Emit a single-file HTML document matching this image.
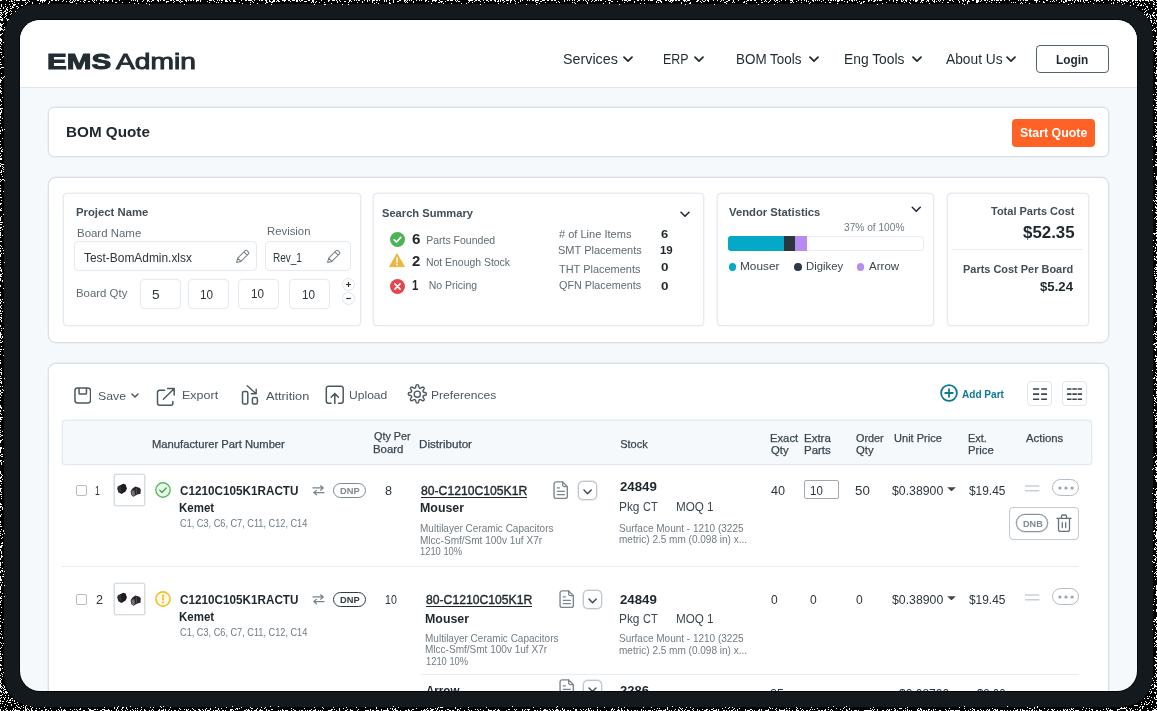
<!DOCTYPE html>
<html><head><meta charset="utf-8"><title>EMS Admin - BOM Quote</title>
<style>
html,body{margin:0;padding:0;background:#000;}
body{width:1157px;height:711px;overflow:hidden;position:relative;font-family:"Liberation Sans",sans-serif;}
.frame{position:absolute;left:4px;top:4px;width:1149px;height:703px;border-radius:32px;background:#14191d;}
.noise{position:absolute;left:0;top:0;}
.win{position:absolute;left:20px;top:20px;width:1117px;height:671px;border-radius:20px;overflow:hidden;background:#f6f9fc;box-shadow:0 0 0 1px #05080a;}
.pg{position:absolute;left:-20px;top:-20px;width:1157px;height:711px;will-change:transform;}
.pg div,.pg svg,.pg span{position:absolute;box-sizing:border-box;}
.t{line-height:1;white-space:pre;}
</style></head><body>
<div class="frame"></div>
<svg class="noise" width="1157" height="711" viewBox="0 0 1157 711" shape-rendering="crispEdges"><path d="M0 0.5h2M6 0.5h1M11 0.5h1M14 0.5h1M16 0.5h4M22 0.5h4M28 0.5h1M37 0.5h2M40 0.5h6M51 0.5h2M55 0.5h2M58 0.5h1M63 0.5h1M70 0.5h1M73 0.5h1M75 0.5h1M77 0.5h2M84 0.5h2M92 0.5h1M94 0.5h1M96 0.5h1M100 0.5h2M103 0.5h1M105 0.5h4M112 0.5h1M119 0.5h1M131 0.5h1M133 0.5h1M135 0.5h1M137 0.5h1M143 0.5h1M147 0.5h2M152 0.5h2M157 0.5h2M160 0.5h1M163 0.5h2M170 0.5h2M173 0.5h1M176 0.5h3M180 0.5h1M185 0.5h2M188 0.5h1M190 0.5h2M193 0.5h1M196 0.5h3M200 0.5h1M209 0.5h3M213 0.5h1M217 0.5h1M219 0.5h1M221 0.5h2M225 0.5h2M229 0.5h1M233 0.5h2M241 0.5h1M245 0.5h2M248 0.5h4M254 0.5h1M259 0.5h1M261 0.5h2M265 0.5h2M269 0.5h1M273 0.5h2M277 0.5h2M282 0.5h4M288 0.5h2M292 0.5h3M296 0.5h2M299 0.5h1M301 0.5h2M308 0.5h2M312 0.5h2M321 0.5h1M328 0.5h2M332 0.5h3M336 0.5h1M339 0.5h1M349 0.5h2M354 0.5h1M356 0.5h1M358 0.5h2M364 0.5h1M367 0.5h1M369 0.5h1M372 0.5h3M376 0.5h2M379 0.5h1M384 0.5h1M386 0.5h1M389 0.5h1M393 0.5h1M399 0.5h2M404 0.5h2M407 0.5h1M409 0.5h1M411 0.5h1M416 0.5h1M419 0.5h1M421 0.5h1M425 0.5h2M432 0.5h5M439 0.5h1M447 0.5h2M450 0.5h3M455 0.5h1M457 0.5h1M468 0.5h5M475 0.5h2M478 0.5h2M483 0.5h1M486 0.5h2M490 0.5h2M494 0.5h2M498 0.5h1M500 0.5h1M502 0.5h2M506 0.5h3M510 0.5h2M514 0.5h1M520 0.5h1M522 0.5h1M527 0.5h1M529 0.5h1M532 0.5h2M535 0.5h4M542 0.5h3M547 0.5h2M551 0.5h2M554 0.5h2M564 0.5h1M567 0.5h1M569 0.5h1M572 0.5h1M574 0.5h1M578 0.5h2M583 0.5h1M585 0.5h1M588 0.5h1M592 0.5h1M595 0.5h2M598 0.5h1M600 0.5h2M608 0.5h3M622 0.5h1M624 0.5h3M628 0.5h3M637 0.5h2M641 0.5h1M644 0.5h1M648 0.5h1M650 0.5h3M657 0.5h4M665 0.5h2M668 0.5h1M670 0.5h4M675 0.5h2M678 0.5h2M683 0.5h3M687 0.5h3M697 0.5h2M702 0.5h1M705 0.5h1M707 0.5h2M713 0.5h1M717 0.5h1M721 0.5h1M723 0.5h1M728 0.5h2M733 0.5h1M738 0.5h1M747 0.5h2M750 0.5h2M754 0.5h2M761 0.5h1M765 0.5h1M770 0.5h1M774 0.5h1M776 0.5h2M781 0.5h1M785 0.5h1M790 0.5h3M798 0.5h1M801 0.5h1M804 0.5h1M806 0.5h1M812 0.5h2M815 0.5h1M817 0.5h1M819 0.5h1M823 0.5h1M828 0.5h1M830 0.5h2M833 0.5h1M835 0.5h1M837 0.5h3M841 0.5h2M849 0.5h1M851 0.5h2M854 0.5h1M856 0.5h1M868 0.5h2M871 0.5h1M874 0.5h2M877 0.5h1M879 0.5h3M889 0.5h1M893 0.5h1M896 0.5h2M901 0.5h1M903 0.5h1M905 0.5h2M910 0.5h1M913 0.5h1M915 0.5h3M921 0.5h3M927 0.5h2M932 0.5h1M934 0.5h1M938 0.5h1M940 0.5h1M943 0.5h1M949 0.5h2M952 0.5h1M958 0.5h1M962 0.5h2M965 0.5h1M968 0.5h1M972 0.5h2M976 0.5h3M981 0.5h1M984 0.5h2M987 0.5h1M991 0.5h2M994 0.5h1M996 0.5h3M1000 0.5h2M1004 0.5h1M1009 0.5h1M1018 0.5h1M1020 0.5h1M1023 0.5h1M1025 0.5h3M1034 0.5h4M1046 0.5h2M1053 0.5h1M1056 0.5h1M1061 0.5h1M1065 0.5h2M1068 0.5h3M1072 0.5h1M1075 0.5h1M1077 0.5h2M1080 0.5h1M1083 0.5h1M1085 0.5h3M1094 0.5h1M1096 0.5h3M1101 0.5h2M1108 0.5h1M1111 0.5h1M1114 0.5h1M1117 0.5h3M1121 0.5h6M1128 0.5h1M1132 0.5h2M1135 0.5h3M1139 0.5h2M1142 0.5h2M1145 0.5h4M1150 0.5h3M1156 0.5h1M9 1.5h1M11 1.5h2M29 1.5h1M40 1.5h1M42 1.5h1M44 1.5h1M49 1.5h1M62 1.5h1M66 1.5h1M69 1.5h1M72 1.5h1M74 1.5h1M80 1.5h1M83 1.5h1M88 1.5h2M93 1.5h1M107 1.5h1M112 1.5h1M137 1.5h1M142 1.5h1M147 1.5h1M149 1.5h1M151 1.5h1M158 1.5h1M166 1.5h3M174 1.5h1M179 1.5h1M181 1.5h2M186 1.5h1M196 1.5h1M200 1.5h1M207 1.5h1M214 1.5h1M225 1.5h3M230 1.5h1M233 1.5h3M252 1.5h1M266 1.5h1M269 1.5h2M272 1.5h3M276 1.5h1M278 1.5h2M284 1.5h1M290 1.5h1M296 1.5h2M300 1.5h1M304 1.5h3M312 1.5h2M316 1.5h1M328 1.5h1M337 1.5h1M340 1.5h1M344 1.5h2M349 1.5h1M351 1.5h1M362 1.5h1M367 1.5h1M372 1.5h1M384 1.5h1M386 1.5h1M393 1.5h1M397 1.5h2M404 1.5h1M406 1.5h1M413 1.5h1M425 1.5h1M428 1.5h1M432 1.5h1M435 1.5h1M440 1.5h3M445 1.5h1M456 1.5h1M458 1.5h2M469 1.5h1M474 1.5h1M480 1.5h1M488 1.5h1M495 1.5h1M497 1.5h2M500 1.5h1M504 1.5h1M510 1.5h1M515 1.5h1M520 1.5h1M535 1.5h1M540 1.5h2M558 1.5h1M564 1.5h1M577 1.5h1M586 1.5h1M591 1.5h1M594 1.5h1M605 1.5h1M611 1.5h2M617 1.5h1M627 1.5h1M634 1.5h1M656 1.5h1M660 1.5h2M669 1.5h2M672 1.5h1M684 1.5h1M686 1.5h1M696 1.5h2M700 1.5h1M703 1.5h2M708 1.5h1M720 1.5h1M726 1.5h2M733 1.5h1M744 1.5h1M746 1.5h1M764 1.5h1M766 1.5h1M769 1.5h1M775 1.5h1M779 1.5h1M792 1.5h1M796 1.5h1M806 1.5h1M808 1.5h1M813 1.5h1M821 1.5h1M837 1.5h2M844 1.5h1M847 1.5h1M852 1.5h1M859 1.5h1M863 1.5h2M868 1.5h1M873 1.5h2M893 1.5h1M901 1.5h2M906 1.5h1M915 1.5h2M921 1.5h1M926 1.5h1M928 1.5h1M933 1.5h2M936 1.5h1M939 1.5h1M953 1.5h1M959 1.5h1M963 1.5h1M967 1.5h3M976 1.5h3M980 1.5h1M989 1.5h1M1036 1.5h1M1039 1.5h1M1043 1.5h1M1050 1.5h1M1052 1.5h1M1054 1.5h1M1061 1.5h1M1063 1.5h1M1065 1.5h2M1074 1.5h1M1078 1.5h1M1080 1.5h1M1083 1.5h1M1090 1.5h1M1096 1.5h1M1099 1.5h1M1119 1.5h1M1123 1.5h1M1126 1.5h2M1132 1.5h1M1140 1.5h1M1148 1.5h1M1153 1.5h1M14 2.5h1M25 2.5h1M27 2.5h1M32 2.5h1M42 2.5h1M49 2.5h1M70 2.5h3M84 2.5h1M94 2.5h1M103 2.5h1M115 2.5h2M122 2.5h1M129 2.5h1M166 2.5h1M173 2.5h1M180 2.5h1M209 2.5h1M216 2.5h1M218 2.5h1M221 2.5h1M239 2.5h1M250 2.5h1M253 2.5h1M266 2.5h2M271 2.5h2M311 2.5h1M313 2.5h1M315 2.5h1M319 2.5h1M324 2.5h1M337 2.5h1M348 2.5h1M357 2.5h1M362 2.5h1M372 2.5h1M376 2.5h1M389 2.5h1M393 2.5h1M405 2.5h1M407 2.5h1M413 2.5h1M438 2.5h2M441 2.5h1M468 2.5h1M472 2.5h1M484 2.5h1M503 2.5h1M510 2.5h1M518 2.5h1M536 2.5h2M545 2.5h1M556 2.5h1M559 2.5h1M572 2.5h1M574 2.5h1M587 2.5h1M609 2.5h1M624 2.5h1M634 2.5h1M656 2.5h1M658 2.5h1M661 2.5h1M671 2.5h1M681 2.5h1M690 2.5h1M701 2.5h1M724 2.5h2M732 2.5h1M734 2.5h1M743 2.5h2M756 2.5h1M761 2.5h2M768 2.5h1M777 2.5h1M790 2.5h2M793 2.5h1M801 2.5h1M810 2.5h1M825 2.5h1M829 2.5h2M847 2.5h1M857 2.5h1M861 2.5h1M863 2.5h1M886 2.5h1M896 2.5h1M904 2.5h1M909 2.5h1M920 2.5h1M922 2.5h1M934 2.5h1M942 2.5h1M947 2.5h2M959 2.5h1M967 2.5h1M976 2.5h2M986 2.5h1M991 2.5h1M996 2.5h1M999 2.5h1M1011 2.5h1M1013 2.5h1M1015 2.5h1M1021 2.5h1M1025 2.5h1M1036 2.5h1M1043 2.5h2M1059 2.5h1M1063 2.5h2M1074 2.5h1M1084 2.5h1M1088 2.5h1M1103 2.5h1M1113 2.5h1M1117 2.5h1M1121 2.5h1M1130 2.5h1M1135 2.5h1M1137 2.5h1M1154 2.5h1M1156 2.5h1M12 3.5h1M18 3.5h1M26 3.5h1M32 3.5h1M39 3.5h1M48 3.5h1M76 3.5h1M99 3.5h1M134 3.5h1M138 3.5h1M146 3.5h1M242 3.5h1M257 3.5h1M265 3.5h1M331 3.5h1M374 3.5h1M378 3.5h1M389 3.5h2M431 3.5h1M443 3.5h1M451 3.5h1M461 3.5h1M466 3.5h1M498 3.5h1M507 3.5h1M515 3.5h1M539 3.5h1M575 3.5h1M587 3.5h1M603 3.5h1M609 3.5h1M640 3.5h1M644 3.5h1M681 3.5h1M689 3.5h2M726 3.5h1M746 3.5h1M809 3.5h1M837 3.5h1M860 3.5h2M882 3.5h1M910 3.5h1M929 3.5h1M962 3.5h1M967 3.5h1M1020 3.5h1M1022 3.5h1M1029 3.5h1M1071 3.5h1M1093 3.5h1M1111 3.5h1M1113 3.5h1M1124 3.5h1M1133 3.5h1M1139 3.5h1M1144 3.5h1M1149 3.5h1M1153 3.5h1M1 4.5h1M5 4.5h1M9 4.5h1M13 4.5h3M25 4.5h1M149 4.5h1M184 4.5h1M250 4.5h1M271 4.5h1M314 4.5h1M324 4.5h2M342 4.5h1M348 4.5h1M480 4.5h1M526 4.5h1M536 4.5h1M619 4.5h1M685 4.5h1M714 4.5h1M758 4.5h1M774 4.5h1M877 4.5h1M964 4.5h1M1068 4.5h1M1122 4.5h1M1133 4.5h1M1138 4.5h1M1141 4.5h1M1145 4.5h1M1153 4.5h2M1 5.5h1M13 5.5h2M21 5.5h2M1130 5.5h1M1137 5.5h2M1140 5.5h2M1143 5.5h1M1156 5.5h1M1 6.5h1M5 6.5h1M10 6.5h1M12 6.5h1M16 6.5h2M1146 6.5h2M1153 6.5h1M3 7.5h1M7 7.5h1M12 7.5h2M18 7.5h1M1136 7.5h1M1147 7.5h1M0 8.5h1M3 8.5h1M6 8.5h1M10 8.5h2M17 8.5h1M1145 8.5h1M1151 8.5h1M1155 8.5h2M6 9.5h2M1142 9.5h1M1144 9.5h1M1148 9.5h1M1155 9.5h1M0 10.5h2M5 10.5h1M7 10.5h1M10 10.5h1M1146 10.5h1M4 11.5h2M9 11.5h1M11 11.5h1M15 11.5h1M1145 11.5h1M0 12.5h2M3 12.5h1M6 12.5h2M1144 12.5h1M1153 12.5h2M1 13.5h1M5 13.5h2M11 13.5h1M1147 13.5h1M1153 13.5h1M0 14.5h1M2 14.5h1M5 14.5h1M10 14.5h1M1144 14.5h1M1146 14.5h2M1149 14.5h1M1152 14.5h1M1156 14.5h1M1 15.5h1M6 15.5h1M1146 15.5h1M1150 15.5h1M1152 15.5h3M1156 15.5h1M0 16.5h1M5 16.5h1M1148 16.5h1M1150 16.5h1M1153 16.5h1M0 17.5h2M4 17.5h1M1147 17.5h1M1150 17.5h1M1154 17.5h1M2 18.5h1M6 18.5h1M1150 18.5h2M1155 18.5h1M0 19.5h3M7 19.5h2M1 20.5h2M7 20.5h1M1150 20.5h2M1154 20.5h1M1156 20.5h1M1151 21.5h1M1156 21.5h1M1151 22.5h1M1154 22.5h1M0 23.5h1M3 23.5h1M1153 23.5h1M1155 23.5h1M0 24.5h3M0 25.5h2M1152 25.5h1M1 26.5h1M0 27.5h1M4 27.5h1M1156 27.5h1M0 28.5h2M1154 28.5h1M0 29.5h3M4 29.5h1M1153 29.5h1M0 30.5h1M3 30.5h1M1152 30.5h1M1154 30.5h2M1155 31.5h1M2 33.5h1M0 34.5h2M0 35.5h1M1153 36.5h1M1156 36.5h1M1156 37.5h1M0 38.5h1M0 39.5h2M1156 39.5h1M0 40.5h2M1 41.5h1M1154 41.5h2M0 42.5h1M3 42.5h1M1154 42.5h1M1156 42.5h1M0 43.5h1M1156 43.5h1M1 44.5h1M1154 44.5h3M0 46.5h1M1156 47.5h1M0 48.5h1M1 49.5h1M1154 49.5h1M1156 49.5h1M1153 50.5h1M1154 51.5h1M0 52.5h2M1156 52.5h1M1156 53.5h1M1 54.5h1M1155 54.5h2M3 56.5h1M2 57.5h1M1156 57.5h1M1155 58.5h1M0 59.5h1M1155 60.5h1M0 62.5h1M1156 63.5h1M0 64.5h2M1154 66.5h1M1 67.5h3M1156 67.5h1M0 68.5h1M1156 68.5h1M1156 70.5h1M1156 71.5h1M1154 72.5h1M1156 72.5h1M1 73.5h1M1155 73.5h2M1155 75.5h1M4 76.5h1M1 77.5h1M3 77.5h1M1156 77.5h1M2 78.5h1M1156 78.5h1M0 79.5h1M0 80.5h2M0 81.5h1M0 82.5h1M1155 82.5h2M1155 83.5h2M1156 84.5h1M0 85.5h1M0 87.5h1M1155 87.5h1M1 88.5h1M1156 89.5h1M0 90.5h1M0 91.5h2M0 92.5h1M1156 92.5h1M1 93.5h1M1153 94.5h1M1155 94.5h1M1156 96.5h1M2 97.5h1M1156 98.5h1M0 99.5h1M1154 99.5h1M0 100.5h1M1155 100.5h2M1 101.5h1M1156 102.5h1M1156 103.5h1M1 104.5h1M0 105.5h1M1153 105.5h1M1156 105.5h1M1155 107.5h2M0 108.5h3M0 109.5h1M1154 109.5h3M1 110.5h1M1156 110.5h1M1 111.5h1M0 112.5h2M1155 112.5h1M0 113.5h1M0 114.5h1M1156 115.5h1M0 116.5h1M0 117.5h1M1155 117.5h1M2 118.5h1M1155 118.5h1M0 120.5h1M1154 122.5h3M0 123.5h1M1155 125.5h1M1156 126.5h1M1 127.5h1M1156 127.5h1M2 129.5h1M4 129.5h1M1155 129.5h1M0 130.5h1M2 130.5h1M1156 130.5h1M0 131.5h1M1155 131.5h1M0 133.5h1M1156 133.5h1M1155 135.5h2M1153 136.5h1M1155 136.5h2M1154 137.5h1M2 138.5h1M1156 138.5h1M1154 139.5h1M1156 140.5h1M0 141.5h1M1156 143.5h1M0 144.5h1M1156 144.5h1M1156 145.5h1M1152 146.5h1M1 147.5h1M0 148.5h1M1155 148.5h1M2 149.5h1M1 150.5h1M1 151.5h2M1156 152.5h1M0 153.5h1M1155 154.5h2M1 155.5h1M0 156.5h1M0 158.5h2M0 159.5h2M1152 159.5h1M1156 159.5h1M1155 161.5h1M1156 162.5h1M0 163.5h1M1 164.5h3M1155 164.5h2M0 165.5h1M1155 165.5h2M0 166.5h1M2 166.5h1M1153 166.5h1M3 167.5h1M2 168.5h1M3 169.5h1M1 170.5h1M1 171.5h1M3 171.5h1M0 172.5h2M1154 173.5h1M1 174.5h1M2 176.5h1M1154 176.5h1M1156 176.5h1M1156 177.5h1M1156 178.5h1M0 179.5h1M2 179.5h2M1156 179.5h1M1 180.5h1M4 180.5h1M0 181.5h1M1155 184.5h1M0 185.5h1M1156 185.5h1M1156 187.5h1M0 188.5h1M1155 189.5h2M0 190.5h1M0 191.5h1M3 191.5h1M1156 192.5h1M0 194.5h1M1155 194.5h2M1155 196.5h1M0 197.5h2M1156 197.5h1M1156 198.5h1M1 200.5h1M1153 200.5h1M1155 200.5h2M1154 201.5h1M1156 201.5h1M0 203.5h2M1155 203.5h1M0 204.5h1M1156 204.5h1M1155 206.5h1M1155 207.5h2M1 208.5h1M1156 208.5h1M0 209.5h1M0 210.5h2M1152 210.5h1M1156 210.5h1M1155 212.5h2M1156 213.5h1M3 214.5h1M1 216.5h1M1156 216.5h1M0 217.5h1M1155 217.5h1M0 218.5h1M1154 218.5h1M1156 218.5h1M0 219.5h1M1156 219.5h1M0 220.5h1M0 222.5h3M1156 223.5h1M0 224.5h2M1156 225.5h1M3 226.5h1M0 227.5h2M0 228.5h1M1156 228.5h1M2 229.5h1M0 230.5h1M1156 230.5h1M0 232.5h1M1156 232.5h1M0 233.5h1M1153 233.5h4M0 234.5h1M1154 234.5h1M0 235.5h1M2 235.5h1M1156 235.5h1M1156 236.5h1M0 237.5h1M1156 239.5h1M1153 240.5h1M1156 240.5h1M0 241.5h2M1155 243.5h1M1156 244.5h1M0 245.5h1M1156 245.5h1M1 246.5h1M1153 246.5h1M1155 247.5h1M0 248.5h1M2 248.5h1M1155 248.5h1M0 250.5h1M3 250.5h1M1155 250.5h1M0 251.5h1M1154 251.5h1M1156 252.5h1M1 253.5h1M3 253.5h1M1156 253.5h1M0 254.5h1M0 255.5h1M0 256.5h1M1154 256.5h1M1156 256.5h1M1156 257.5h1M1154 258.5h1M1154 259.5h2M0 260.5h1M1156 260.5h1M0 262.5h1M4 262.5h1M0 264.5h1M1156 264.5h1M1156 265.5h1M0 267.5h1M1155 267.5h2M0 268.5h1M1154 268.5h1M1156 268.5h1M1 269.5h1M1155 269.5h2M0 270.5h2M1 271.5h1M1154 271.5h1M1156 271.5h1M2 273.5h1M1154 273.5h1M1156 273.5h1M0 274.5h2M0 275.5h1M1154 275.5h2M0 276.5h2M1155 277.5h2M0 278.5h1M1155 278.5h1M0 279.5h1M1156 279.5h1M0 280.5h1M2 280.5h1M1156 280.5h1M2 281.5h1M1156 282.5h1M1156 283.5h1M1156 284.5h1M0 285.5h1M1154 285.5h1M1156 285.5h1M0 286.5h1M1156 286.5h1M1156 287.5h1M3 288.5h1M1155 288.5h2M1156 289.5h1M0 292.5h1M1155 292.5h1M1156 293.5h1M0 294.5h1M1152 294.5h1M0 295.5h1M1156 295.5h1M1156 296.5h1M1156 297.5h1M1154 298.5h2M0 299.5h1M2 299.5h1M1156 299.5h1M0 300.5h1M1 301.5h1M0 302.5h1M3 302.5h1M1154 302.5h1M0 303.5h1M1156 303.5h1M1 305.5h1M1156 305.5h1M0 306.5h1M1156 306.5h1M0 307.5h1M1155 307.5h2M1 308.5h1M1152 308.5h1M1155 309.5h1M0 310.5h1M1155 310.5h2M0 311.5h1M2 311.5h1M1156 311.5h1M1156 312.5h1M0 313.5h2M1155 314.5h2M1 315.5h1M1156 316.5h1M0 317.5h2M1154 317.5h1M1 318.5h1M0 319.5h1M1 320.5h1M1 321.5h1M1156 322.5h1M1155 323.5h1M1155 324.5h1M0 325.5h1M0 326.5h1M1154 326.5h1M1 328.5h1M3 328.5h1M1 330.5h1M1154 331.5h1M1156 331.5h1M0 332.5h1M1156 332.5h1M0 333.5h1M1154 333.5h2M0 334.5h2M1153 334.5h1M1155 334.5h2M0 335.5h1M0 336.5h1M2 336.5h1M1155 336.5h1M0 337.5h1M2 337.5h1M1156 337.5h1M1 338.5h1M1155 338.5h1M1156 339.5h1M0 340.5h1M2 341.5h1M0 342.5h2M1156 342.5h1M1154 343.5h3M1153 344.5h2M1155 345.5h1M1 346.5h1M1156 346.5h1M1155 347.5h2M0 349.5h2M3 349.5h1M1154 349.5h2M1155 350.5h1M0 351.5h1M0 354.5h1M3 355.5h1M1155 355.5h1M1155 356.5h2M1156 358.5h1M1154 359.5h1M1156 359.5h1M0 360.5h1M1156 360.5h1M1155 361.5h2M0 362.5h1M0 363.5h1M1156 363.5h1M1156 365.5h1M1156 366.5h1M1 368.5h1M0 369.5h1M1156 369.5h1M1 370.5h1M1152 370.5h1M0 372.5h2M1155 372.5h1M1 373.5h1M1156 373.5h1M1 374.5h1M1155 375.5h1M0 376.5h1M1156 376.5h1M1154 377.5h1M0 378.5h2M4 378.5h1M1153 378.5h2M1156 378.5h1M1156 379.5h1M0 380.5h1M1156 380.5h1M1 381.5h1M0 382.5h2M1 383.5h1M1155 383.5h1M1154 384.5h1M1156 384.5h1M0 386.5h1M2 386.5h1M1156 386.5h1M2 389.5h1M1154 389.5h1M1156 389.5h1M0 390.5h1M3 390.5h1M0 391.5h1M1156 391.5h1M1 392.5h2M1156 392.5h1M0 393.5h1M1156 393.5h1M0 394.5h1M1 395.5h1M1153 395.5h1M1156 395.5h1M0 397.5h1M1154 397.5h1M1156 397.5h1M1154 398.5h2M1155 399.5h1M0 400.5h1M1154 400.5h1M1155 401.5h1M1156 402.5h1M1154 403.5h1M0 405.5h1M1154 405.5h1M0 406.5h1M0 407.5h2M1 408.5h1M1154 409.5h1M0 410.5h1M3 410.5h1M1154 410.5h2M0 411.5h1M1153 412.5h1M0 413.5h1M1156 413.5h1M1 414.5h1M1154 415.5h1M1156 415.5h1M1155 416.5h1M0 417.5h3M0 418.5h1M1155 418.5h2M0 419.5h2M1155 419.5h1M1156 420.5h1M0 421.5h1M1155 421.5h1M0 425.5h1M1155 425.5h2M1156 426.5h1M0 427.5h1M1155 427.5h2M0 430.5h1M2 431.5h1M0 432.5h1M1156 432.5h1M1156 433.5h1M0 434.5h1M1155 434.5h1M1 435.5h2M0 436.5h1M1156 436.5h1M1156 437.5h1M2 439.5h1M0 440.5h2M0 441.5h1M1155 441.5h1M0 442.5h1M1156 442.5h1M1156 444.5h1M0 447.5h2M1156 447.5h1M0 448.5h2M3 448.5h1M0 449.5h1M0 450.5h1M0 451.5h1M0 452.5h1M1155 453.5h1M1 454.5h2M0 455.5h1M1156 455.5h1M1 456.5h2M1154 456.5h1M1153 457.5h1M0 460.5h2M1156 460.5h1M0 461.5h1M3 461.5h1M1155 461.5h2M1 462.5h1M1155 462.5h1M1 463.5h1M1156 463.5h1M1 464.5h1M1156 464.5h1M1154 465.5h1M1155 467.5h2M1153 468.5h1M1156 468.5h1M1152 469.5h1M1155 469.5h2M1156 470.5h1M0 471.5h1M0 472.5h1M1156 472.5h1M0 473.5h1M1 474.5h1M2 475.5h1M1154 475.5h1M1156 475.5h1M1 476.5h1M1155 476.5h2M0 477.5h2M1155 477.5h2M0 478.5h1M2 479.5h1M1155 479.5h2M0 480.5h1M1156 480.5h1M0 481.5h2M1156 481.5h1M1 483.5h1M0 485.5h1M0 488.5h2M1153 488.5h1M1156 488.5h1M0 489.5h1M1155 489.5h1M0 490.5h1M0 491.5h1M1156 491.5h1M1 492.5h1M1156 492.5h1M1152 493.5h1M1156 493.5h1M0 494.5h2M1154 494.5h3M1155 495.5h1M1 496.5h1M1156 496.5h1M1156 497.5h1M1 498.5h1M1154 499.5h1M1156 499.5h1M1156 501.5h1M1154 502.5h1M0 503.5h1M1156 503.5h1M0 504.5h2M1156 504.5h1M1156 505.5h1M0 506.5h2M1156 506.5h1M0 507.5h1M2 507.5h1M1154 507.5h1M1156 507.5h1M2 508.5h1M1156 508.5h1M2 509.5h1M0 510.5h1M1155 512.5h2M1155 513.5h1M1 514.5h1M0 515.5h1M1155 515.5h1M0 516.5h1M1156 517.5h1M1155 520.5h1M0 521.5h1M1156 521.5h1M0 522.5h1M1155 522.5h2M1156 523.5h1M0 524.5h1M1155 524.5h1M0 526.5h2M1156 526.5h1M1155 527.5h1M1156 528.5h1M1 529.5h1M3 530.5h1M1154 530.5h1M0 531.5h1M3 531.5h1M1153 531.5h2M1156 531.5h1M1156 532.5h1M0 533.5h1M4 533.5h1M1156 533.5h1M2 534.5h1M1154 534.5h1M1156 534.5h1M0 535.5h1M1155 535.5h2M1155 536.5h2M2 537.5h1M1156 537.5h1M1 538.5h1M1156 538.5h1M1155 539.5h1M1153 540.5h1M2 542.5h1M1156 542.5h1M1 543.5h2M1155 543.5h1M1155 544.5h2M1 545.5h2M1156 545.5h1M0 546.5h2M0 547.5h2M1155 547.5h1M1154 548.5h1M1156 548.5h1M0 549.5h1M1154 549.5h2M0 550.5h1M1 551.5h1M1156 551.5h1M1 552.5h1M1 553.5h1M1156 553.5h1M1 555.5h1M1153 555.5h2M1 556.5h2M1155 556.5h1M1 557.5h1M1156 557.5h1M0 558.5h1M1155 558.5h1M0 559.5h1M1154 559.5h2M1155 560.5h1M1152 561.5h1M0 562.5h1M2 562.5h1M1153 562.5h2M0 563.5h1M1156 563.5h1M0 564.5h1M0 565.5h1M1156 565.5h1M1155 566.5h1M0 567.5h1M2 568.5h1M1156 569.5h1M1 570.5h2M0 571.5h1M2 571.5h1M4 571.5h1M1152 571.5h1M1156 571.5h1M0 572.5h1M1155 572.5h1M1154 573.5h1M1156 573.5h1M3 574.5h1M1156 574.5h1M0 576.5h1M2 576.5h2M1154 576.5h1M1156 576.5h1M0 577.5h1M0 578.5h1M0 579.5h2M1155 579.5h1M0 580.5h2M0 582.5h1M2 582.5h1M1 584.5h1M1 585.5h1M4 585.5h1M1156 585.5h1M0 586.5h1M1154 586.5h1M1156 586.5h1M0 587.5h1M1156 587.5h1M0 588.5h1M1153 588.5h1M1156 588.5h1M0 589.5h1M1156 589.5h1M0 591.5h1M1156 591.5h1M0 592.5h1M1156 592.5h1M2 593.5h1M1156 593.5h1M1155 594.5h2M1156 595.5h1M1 596.5h1M4 596.5h1M0 597.5h1M0 598.5h2M1156 598.5h1M1154 599.5h1M1 600.5h1M0 601.5h1M1154 601.5h1M0 602.5h1M0 604.5h1M1153 604.5h1M1156 604.5h1M1156 605.5h1M1 607.5h1M1156 609.5h1M1153 610.5h1M1156 610.5h1M1156 611.5h1M1 612.5h1M0 615.5h1M1156 617.5h1M0 618.5h1M1156 618.5h1M3 619.5h1M1154 619.5h3M1155 620.5h1M0 621.5h1M1153 621.5h2M1156 621.5h1M2 622.5h1M1156 622.5h1M1154 624.5h1M0 625.5h1M1156 625.5h1M0 626.5h1M1155 626.5h1M1156 627.5h1M0 628.5h1M1156 628.5h1M1152 629.5h1M1156 629.5h1M1 631.5h1M1155 632.5h1M0 633.5h1M1156 633.5h1M1 634.5h1M1155 634.5h1M1156 636.5h1M0 637.5h1M2 637.5h1M1154 637.5h2M2 638.5h1M1154 638.5h1M1156 640.5h1M1155 641.5h2M0 642.5h1M1156 642.5h1M1 643.5h1M3 643.5h1M1154 643.5h1M1156 644.5h1M2 645.5h1M1155 645.5h1M1154 646.5h1M1156 646.5h1M1 647.5h1M0 648.5h1M0 651.5h1M1156 651.5h1M1156 652.5h1M0 653.5h1M0 654.5h1M2 654.5h1M1156 655.5h1M0 656.5h1M1 657.5h1M1154 657.5h2M0 658.5h2M1155 658.5h2M0 660.5h2M1155 660.5h2M1156 661.5h1M0 664.5h1M1155 664.5h2M0 665.5h2M1154 665.5h2M1155 666.5h1M1156 667.5h1M0 668.5h1M2 668.5h1M1156 668.5h1M0 669.5h1M1155 669.5h1M0 670.5h1M1156 671.5h1M3 672.5h1M1 673.5h1M1155 673.5h1M2 674.5h1M1156 674.5h1M0 675.5h1M1156 675.5h1M2 676.5h1M1154 676.5h1M1156 676.5h1M1155 677.5h1M0 678.5h1M1152 678.5h1M1 679.5h1M0 680.5h1M1153 680.5h1M1156 680.5h1M0 681.5h1M0 682.5h1M1154 682.5h1M1156 682.5h1M1 683.5h1M0 684.5h1M1152 684.5h1M1154 684.5h1M0 685.5h1M3 685.5h1M1151 685.5h1M1154 685.5h2M0 686.5h2M4 686.5h1M1154 686.5h3M0 687.5h1M2 687.5h1M4 687.5h1M1154 687.5h1M1 688.5h1M3 688.5h1M1152 688.5h2M4 689.5h2M1150 689.5h1M1156 689.5h1M0 690.5h1M3 690.5h1M0 691.5h2M5 691.5h2M1149 691.5h1M1151 691.5h1M1 692.5h1M3 692.5h1M5 692.5h3M1151 692.5h1M1154 692.5h2M4 693.5h1M6 693.5h1M1150 693.5h1M1155 693.5h1M2 694.5h1M0 695.5h2M5 695.5h1M8 695.5h1M1156 695.5h1M1147 696.5h1M1149 696.5h1M1156 696.5h1M1 697.5h1M3 697.5h1M5 697.5h1M8 697.5h1M1151 697.5h1M1154 697.5h1M1156 697.5h1M0 698.5h1M4 698.5h1M8 698.5h1M11 698.5h2M1144 698.5h1M1147 698.5h2M1154 698.5h1M4 699.5h1M10 699.5h1M1155 699.5h2M0 700.5h1M7 700.5h1M9 700.5h2M12 700.5h1M14 700.5h1M1150 700.5h1M0 701.5h1M2 701.5h2M6 701.5h1M14 701.5h1M1145 701.5h1M1152 701.5h1M8 702.5h3M17 702.5h1M1141 702.5h1M1146 702.5h1M1149 702.5h1M1152 702.5h1M1156 702.5h1M0 703.5h1M2 703.5h1M14 703.5h2M1144 703.5h1M1148 703.5h1M1156 703.5h1M5 704.5h1M11 704.5h1M18 704.5h1M1141 704.5h1M1144 704.5h1M1146 704.5h2M1151 704.5h1M7 705.5h1M11 705.5h1M16 705.5h1M23 705.5h1M26 705.5h1M1134 705.5h4M4 706.5h1M17 706.5h1M21 706.5h1M25 706.5h1M30 706.5h1M118 706.5h1M130 706.5h1M160 706.5h1M163 706.5h1M232 706.5h1M270 706.5h1M278 706.5h1M393 706.5h1M512 706.5h1M557 706.5h1M672 706.5h1M833 706.5h1M846 706.5h1M964 706.5h1M1007 706.5h1M1037 706.5h1M1140 706.5h1M1142 706.5h2M1155 706.5h1M1 707.5h1M15 707.5h1M18 707.5h2M23 707.5h1M25 707.5h1M32 707.5h1M44 707.5h1M60 707.5h1M104 707.5h1M114 707.5h1M117 707.5h1M122 707.5h2M126 707.5h1M141 707.5h1M150 707.5h1M153 707.5h1M161 707.5h1M170 707.5h1M215 707.5h1M226 707.5h1M241 707.5h1M250 707.5h1M261 707.5h1M265 707.5h1M314 707.5h1M322 707.5h1M333 707.5h1M346 707.5h1M356 707.5h1M365 707.5h1M376 707.5h1M398 707.5h1M438 707.5h1M440 707.5h3M455 707.5h1M468 707.5h1M486 707.5h1M533 707.5h1M556 707.5h1M597 707.5h1M604 707.5h1M618 707.5h1M624 707.5h1M643 707.5h1M651 707.5h1M667 707.5h1M679 707.5h1M686 707.5h1M690 707.5h1M725 707.5h1M729 707.5h1M732 707.5h1M769 707.5h1M796 707.5h1M811 707.5h1M828 707.5h1M844 707.5h1M873 707.5h1M907 707.5h1M959 707.5h1M1027 707.5h1M1034 707.5h1M1037 707.5h1M1083 707.5h1M1121 707.5h1M1124 707.5h1M1126 707.5h1M1139 707.5h1M1142 707.5h1M1151 707.5h1M6 708.5h1M13 708.5h1M20 708.5h1M25 708.5h1M27 708.5h1M31 708.5h1M36 708.5h1M39 708.5h1M50 708.5h1M80 708.5h1M88 708.5h1M114 708.5h1M117 708.5h1M122 708.5h1M126 708.5h1M135 708.5h1M137 708.5h1M179 708.5h1M192 708.5h1M206 708.5h1M210 708.5h1M218 708.5h1M221 708.5h1M236 708.5h2M239 708.5h1M251 708.5h2M257 708.5h1M264 708.5h1M291 708.5h1M304 708.5h1M323 708.5h1M339 708.5h1M343 708.5h1M376 708.5h1M387 708.5h1M390 708.5h1M392 708.5h1M395 708.5h1M416 708.5h1M427 708.5h1M430 708.5h1M435 708.5h1M437 708.5h1M455 708.5h1M460 708.5h1M540 708.5h1M562 708.5h1M573 708.5h1M588 708.5h1M590 708.5h1M612 708.5h1M621 708.5h1M657 708.5h1M659 708.5h1M667 708.5h1M680 708.5h1M682 708.5h1M693 708.5h1M713 708.5h1M722 708.5h1M728 708.5h1M734 708.5h1M739 708.5h1M770 708.5h1M772 708.5h1M776 708.5h1M786 708.5h1M789 708.5h1M797 708.5h1M800 708.5h1M817 708.5h1M836 708.5h1M843 708.5h1M849 708.5h1M870 708.5h1M894 708.5h1M899 708.5h3M905 708.5h1M918 708.5h1M920 708.5h1M949 708.5h1M964 708.5h1M972 708.5h1M992 708.5h1M1014 708.5h1M1029 708.5h2M1034 708.5h1M1044 708.5h1M1071 708.5h1M1073 708.5h1M1086 708.5h1M1089 708.5h1M1106 708.5h1M1108 708.5h1M1120 708.5h6M1129 708.5h1M1131 708.5h1M1142 708.5h1M1147 708.5h1M1153 708.5h1M1156 708.5h1M0 709.5h1M5 709.5h1M13 709.5h1M15 709.5h1M25 709.5h2M28 709.5h1M31 709.5h1M45 709.5h2M58 709.5h1M61 709.5h1M64 709.5h1M70 709.5h1M74 709.5h1M76 709.5h1M79 709.5h2M89 709.5h2M94 709.5h2M97 709.5h1M102 709.5h3M108 709.5h1M116 709.5h1M121 709.5h1M127 709.5h1M132 709.5h1M141 709.5h1M144 709.5h1M152 709.5h1M159 709.5h1M163 709.5h1M165 709.5h1M169 709.5h1M180 709.5h1M184 709.5h1M186 709.5h1M188 709.5h1M193 709.5h1M198 709.5h2M202 709.5h1M205 709.5h1M210 709.5h1M218 709.5h1M230 709.5h3M235 709.5h1M237 709.5h1M246 709.5h1M248 709.5h1M256 709.5h1M260 709.5h1M266 709.5h1M271 709.5h2M282 709.5h1M293 709.5h1M311 709.5h1M315 709.5h1M331 709.5h2M334 709.5h1M339 709.5h1M347 709.5h1M350 709.5h1M358 709.5h1M370 709.5h1M381 709.5h1M387 709.5h1M392 709.5h1M394 709.5h2M408 709.5h1M412 709.5h2M424 709.5h1M426 709.5h1M431 709.5h3M437 709.5h1M447 709.5h2M457 709.5h2M468 709.5h1M475 709.5h1M477 709.5h1M480 709.5h1M488 709.5h1M495 709.5h1M498 709.5h1M508 709.5h2M514 709.5h1M516 709.5h1M522 709.5h1M525 709.5h1M527 709.5h3M544 709.5h2M549 709.5h1M552 709.5h1M556 709.5h2M562 709.5h1M564 709.5h1M575 709.5h2M580 709.5h1M583 709.5h1M586 709.5h1M588 709.5h1M597 709.5h1M611 709.5h2M614 709.5h1M618 709.5h1M621 709.5h1M627 709.5h1M641 709.5h1M654 709.5h1M665 709.5h1M667 709.5h1M675 709.5h1M678 709.5h1M681 709.5h1M685 709.5h1M692 709.5h1M697 709.5h1M702 709.5h1M706 709.5h2M711 709.5h2M716 709.5h1M718 709.5h1M733 709.5h1M737 709.5h1M745 709.5h1M750 709.5h2M759 709.5h1M761 709.5h1M768 709.5h1M775 709.5h1M779 709.5h1M784 709.5h1M796 709.5h1M802 709.5h1M810 709.5h1M812 709.5h1M814 709.5h1M825 709.5h1M828 709.5h1M831 709.5h1M840 709.5h1M846 709.5h1M849 709.5h1M872 709.5h1M874 709.5h1M877 709.5h1M887 709.5h1M889 709.5h1M891 709.5h1M895 709.5h1M907 709.5h1M917 709.5h1M920 709.5h2M928 709.5h2M933 709.5h1M935 709.5h1M945 709.5h1M970 709.5h1M973 709.5h2M980 709.5h1M987 709.5h1M989 709.5h1M994 709.5h2M997 709.5h1M1017 709.5h1M1020 709.5h1M1022 709.5h1M1032 709.5h1M1039 709.5h1M1048 709.5h1M1051 709.5h2M1054 709.5h1M1063 709.5h1M1065 709.5h1M1067 709.5h1M1069 709.5h1M1071 709.5h2M1082 709.5h1M1091 709.5h2M1103 709.5h1M1106 709.5h1M1110 709.5h1M1117 709.5h3M1126 709.5h1M1130 709.5h1M1135 709.5h1M1137 709.5h1M1140 709.5h1M1154 709.5h2M0 710.5h1M3 710.5h1M6 710.5h2M10 710.5h1M12 710.5h1M14 710.5h6M23 710.5h1M25 710.5h2M29 710.5h1M31 710.5h2M35 710.5h2M41 710.5h2M45 710.5h1M48 710.5h1M51 710.5h1M56 710.5h1M59 710.5h1M61 710.5h1M63 710.5h3M72 710.5h1M77 710.5h1M83 710.5h2M89 710.5h5M100 710.5h2M104 710.5h6M111 710.5h1M116 710.5h1M118 710.5h1M122 710.5h1M125 710.5h1M130 710.5h1M133 710.5h1M135 710.5h1M137 710.5h1M140 710.5h1M144 710.5h2M149 710.5h1M151 710.5h1M153 710.5h1M158 710.5h2M161 710.5h3M165 710.5h1M168 710.5h1M171 710.5h1M174 710.5h2M178 710.5h1M186 710.5h2M190 710.5h1M194 710.5h2M199 710.5h2M203 710.5h1M205 710.5h1M207 710.5h3M213 710.5h1M215 710.5h3M219 710.5h1M222 710.5h2M225 710.5h1M230 710.5h2M233 710.5h1M244 710.5h2M247 710.5h3M251 710.5h1M254 710.5h3M259 710.5h4M266 710.5h1M268 710.5h2M278 710.5h1M280 710.5h1M282 710.5h2M285 710.5h3M291 710.5h1M294 710.5h2M299 710.5h1M301 710.5h2M305 710.5h1M307 710.5h1M309 710.5h2M313 710.5h3M318 710.5h1M320 710.5h1M322 710.5h1M328 710.5h4M336 710.5h1M339 710.5h1M345 710.5h2M350 710.5h3M357 710.5h1M365 710.5h4M370 710.5h1M372 710.5h2M376 710.5h3M381 710.5h1M383 710.5h6M393 710.5h1M395 710.5h3M400 710.5h1M405 710.5h2M408 710.5h2M411 710.5h1M421 710.5h1M423 710.5h3M427 710.5h2M430 710.5h3M436 710.5h1M439 710.5h1M441 710.5h2M445 710.5h1M449 710.5h2M452 710.5h2M457 710.5h1M459 710.5h1M464 710.5h1M469 710.5h1M471 710.5h1M478 710.5h1M483 710.5h1M488 710.5h4M493 710.5h2M497 710.5h3M506 710.5h1M515 710.5h1M522 710.5h1M524 710.5h1M528 710.5h1M534 710.5h2M537 710.5h1M540 710.5h1M543 710.5h5M550 710.5h1M553 710.5h1M555 710.5h4M560 710.5h1M563 710.5h2M567 710.5h2M570 710.5h1M575 710.5h2M581 710.5h1M585 710.5h1M588 710.5h2M591 710.5h1M593 710.5h1M597 710.5h1M600 710.5h1M606 710.5h1M611 710.5h1M613 710.5h1M617 710.5h3M621 710.5h2M624 710.5h1M627 710.5h2M631 710.5h1M634 710.5h2M637 710.5h1M641 710.5h1M643 710.5h1M645 710.5h1M648 710.5h3M652 710.5h1M656 710.5h1M658 710.5h4M663 710.5h3M669 710.5h1M671 710.5h1M674 710.5h1M678 710.5h2M682 710.5h1M684 710.5h1M687 710.5h3M693 710.5h1M697 710.5h1M699 710.5h1M704 710.5h3M709 710.5h1M713 710.5h4M718 710.5h1M723 710.5h2M726 710.5h1M729 710.5h1M731 710.5h2M735 710.5h1M737 710.5h1M745 710.5h1M747 710.5h3M752 710.5h1M754 710.5h1M758 710.5h2M761 710.5h1M765 710.5h4M776 710.5h1M779 710.5h6M786 710.5h2M789 710.5h1M792 710.5h1M796 710.5h3M801 710.5h1M803 710.5h1M806 710.5h2M809 710.5h1M818 710.5h2M821 710.5h2M824 710.5h2M830 710.5h1M832 710.5h1M842 710.5h1M846 710.5h2M851 710.5h1M854 710.5h3M858 710.5h1M864 710.5h8M873 710.5h1M877 710.5h1M882 710.5h2M886 710.5h1M888 710.5h2M894 710.5h2M897 710.5h1M903 710.5h1M905 710.5h1M907 710.5h1M909 710.5h1M911 710.5h1M917 710.5h3M921 710.5h1M923 710.5h2M926 710.5h1M928 710.5h1M931 710.5h1M933 710.5h1M939 710.5h2M946 710.5h1M948 710.5h1M950 710.5h4M955 710.5h5M965 710.5h1M968 710.5h1M972 710.5h1M974 710.5h1M977 710.5h2M981 710.5h1M983 710.5h1M986 710.5h1M988 710.5h2M993 710.5h1M995 710.5h3M1000 710.5h3M1004 710.5h1M1007 710.5h1M1010 710.5h1M1013 710.5h1M1015 710.5h3M1020 710.5h1M1022 710.5h3M1026 710.5h2M1029 710.5h1M1031 710.5h2M1034 710.5h1M1036 710.5h1M1039 710.5h3M1047 710.5h1M1052 710.5h2M1057 710.5h1M1060 710.5h1M1063 710.5h2M1066 710.5h2M1070 710.5h1M1073 710.5h1M1075 710.5h4M1085 710.5h1M1089 710.5h1M1092 710.5h1M1096 710.5h2M1100 710.5h1M1107 710.5h1M1109 710.5h4M1117 710.5h1M1126 710.5h2M1130 710.5h1M1132 710.5h2M1139 710.5h2M1147 710.5h2M1152 710.5h5" stroke="#fff" stroke-width="1" fill="none"/></svg>
<div class="win"><div class="pg">
<div style="left:20.0px;top:20.0px;width:1117.0px;height:67.0px;background:#fff;"></div>
<div style="left:20.0px;top:87.0px;width:1117.0px;height:1.0px;background:#dfe6ec;"></div>
<svg style="left:623.4px;top:56.2px;" width="10" height="7" viewBox="0 0 10 7" fill="none"><path d="M1 1.2l4 4 4-4" stroke="#1f2a30" stroke-width="1.7" stroke-linecap="round" stroke-linejoin="round"/></svg>
<svg style="left:694.0px;top:56.2px;" width="10" height="7" viewBox="0 0 10 7" fill="none"><path d="M1 1.2l4 4 4-4" stroke="#1f2a30" stroke-width="1.7" stroke-linecap="round" stroke-linejoin="round"/></svg>
<svg style="left:809.4px;top:56.2px;" width="10" height="7" viewBox="0 0 10 7" fill="none"><path d="M1 1.2l4 4 4-4" stroke="#1f2a30" stroke-width="1.7" stroke-linecap="round" stroke-linejoin="round"/></svg>
<svg style="left:911.7px;top:56.2px;" width="10" height="7" viewBox="0 0 10 7" fill="none"><path d="M1 1.2l4 4 4-4" stroke="#1f2a30" stroke-width="1.7" stroke-linecap="round" stroke-linejoin="round"/></svg>
<svg style="left:1006.0px;top:56.2px;" width="10" height="7" viewBox="0 0 10 7" fill="none"><path d="M1 1.2l4 4 4-4" stroke="#1f2a30" stroke-width="1.7" stroke-linecap="round" stroke-linejoin="round"/></svg>
<div style="left:1036.0px;top:45.0px;width:73.0px;height:28.0px;border:1.5px solid #55636a;border-radius:4px;background:#fff;"></div>
<div style="left:48.0px;top:107.0px;width:1061.0px;height:50.0px;border:1px solid #dae1e6;box-shadow:0 0 0 .5px rgba(218,225,230,.7);border-radius:6px;background:#fff;"></div>
<div style="left:1012.2px;top:119.2px;width:83.2px;height:27.4px;background:#ff6224;border-radius:4px;"></div>
<div style="left:48.0px;top:177.0px;width:1061.0px;height:166.0px;border:1px solid #dae1e6;box-shadow:0 0 0 .5px rgba(218,225,230,.7);border-radius:8px;background:#fff;"></div>
<div style="left:63.3px;top:193.3px;width:298.0px;height:132.7px;border:1px solid #e5ebf1;box-shadow:0 0 0 .5px rgba(229,235,241,.8);border-radius:4px;background:#fff;"></div>
<div style="left:373.0px;top:193.3px;width:330.7px;height:132.7px;border:1px solid #e5ebf1;box-shadow:0 0 0 .5px rgba(229,235,241,.8);border-radius:4px;background:#fff;"></div>
<div style="left:717.0px;top:193.3px;width:216.8px;height:132.7px;border:1px solid #e5ebf1;box-shadow:0 0 0 .5px rgba(229,235,241,.8);border-radius:4px;background:#fff;"></div>
<div style="left:946.7px;top:193.3px;width:142.4px;height:132.7px;border:1px solid #e5ebf1;box-shadow:0 0 0 .5px rgba(229,235,241,.8);border-radius:4px;background:#fff;"></div>
<div style="left:74.3px;top:241.0px;width:182.5px;height:29.5px;border:1px solid #e4eaf0;border-radius:4px;background:#fff;"></div>
<div style="left:264.7px;top:241.0px;width:86.2px;height:29.5px;border:1px solid #e4eaf0;border-radius:4px;background:#fff;"></div>
<svg style="left:234.8px;top:248.6px;" width="15" height="15" viewBox="0 0 15 15" fill="none"><g transform="translate(1.6 13.5) rotate(-45)"><path d="M0 0L3.800 -2.300H14.400a1.300 1.300 0 0 1 1.300 1.300V1a1.300 1.300 0 0 1-1.300 1.300H3.800ZM3.800 -2.300V2.300M12.600 -2.300V2.300" stroke="#737f87" stroke-width="1" stroke-linejoin="round"/></g></svg>
<svg style="left:326.4px;top:248.6px;" width="15" height="15" viewBox="0 0 15 15" fill="none"><g transform="translate(1.6 13.5) rotate(-45)"><path d="M0 0L3.800 -2.300H14.400a1.300 1.300 0 0 1 1.300 1.300V1a1.300 1.300 0 0 1-1.300 1.300H3.800ZM3.800 -2.300V2.300M12.600 -2.300V2.300" stroke="#737f87" stroke-width="1" stroke-linejoin="round"/></g></svg>
<div style="left:139.8px;top:279.1px;width:41.0px;height:29.6px;border:1px solid #e4eaf0;border-radius:4px;background:#fff;"></div>
<div style="left:187.7px;top:279.1px;width:41.0px;height:29.6px;border:1px solid #e4eaf0;border-radius:4px;background:#fff;"></div>
<div style="left:238.3px;top:279.1px;width:41.0px;height:29.6px;border:1px solid #e4eaf0;border-radius:4px;background:#fff;"></div>
<div style="left:288.9px;top:279.1px;width:41.0px;height:29.6px;border:1px solid #e4eaf0;border-radius:4px;background:#fff;"></div>
<svg style="left:342.1px;top:278.0px;" width="13" height="13" viewBox="0 0 13 13" fill="none"><circle cx="6.5" cy="6.5" r="6" stroke="#dde4ea" stroke-width="1" fill="#fff"/><path d="M3.5 6h5M6 3.5v5" stroke="#2b353b" stroke-width="1.200" transform="translate(.5 .5)"/></svg>
<svg style="left:342.1px;top:292.0px;" width="13" height="13" viewBox="0 0 13 13" fill="none"><circle cx="6.5" cy="6.5" r="6" stroke="#dde4ea" stroke-width="1" fill="#fff"/><path d="M3.7 6h4.6" stroke="#2b353b" stroke-width="1.200" transform="translate(.5 .5)"/></svg>
<svg style="left:679.8px;top:210.9px;" width="10" height="7" viewBox="0 0 10 7" fill="none"><path d="M1 1.2l4 4 4-4" stroke="#1c2536" stroke-width="1.5" stroke-linecap="round" stroke-linejoin="round"/></svg>
<svg style="left:389.8px;top:231.6px;" width="15" height="15" viewBox="0 0 15 15" fill="none"><circle cx="7.5" cy="7.5" r="7.5" fill="#4bb455"/><path d="M4.2 7.8l2.3 2.2 4.3-4.6" stroke="#fff" stroke-width="1.7" stroke-linecap="round" stroke-linejoin="round"/></svg>
<svg style="left:389.3px;top:253.2px;" width="16" height="14.5" viewBox="0 0 16 14.5" fill="none"><path d="M8 .8L15.4 13.6H.6z" fill="#eeb63e" stroke="#eeb63e" stroke-width="1" stroke-linejoin="round"/><path d="M8 5v4.4" stroke="#fff" stroke-width="1.6" stroke-linecap="round"/><circle cx="8" cy="11.6" r=".95" fill="#fff"/></svg>
<svg style="left:389.8px;top:278.6px;" width="15" height="15" viewBox="0 0 15 15" fill="none"><circle cx="7.5" cy="7.5" r="7.5" fill="#e6464d"/><path d="M4.9 4.9l5.2 5.2M10.1 4.9l-5.2 5.2" stroke="#fff" stroke-width="1.7" stroke-linecap="round"/></svg>
<svg style="left:911.4px;top:205.5px;" width="10.5" height="7" viewBox="0 0 10 7" fill="none"><path d="M1 1.2l4 4 4-4" stroke="#1c2536" stroke-width="1.5" stroke-linecap="round" stroke-linejoin="round"/></svg>
<div style="left:728.2px;top:235.8px;width:196.3px;height:14.8px;border:1px solid #e9eef4;border-radius:3px;background:#fff;overflow:hidden;"></div>
<div style="left:728.2px;top:235.8px;width:56.2px;height:14.8px;background:#03a9c6;border-radius:3px 0 0 3px;"></div>
<div style="left:784.0px;top:235.8px;width:12.0px;height:14.8px;background:#2b373d;"></div>
<div style="left:795.4px;top:235.8px;width:11.6px;height:14.8px;background:#b68cf0;"></div>
<div style="left:728.9px;top:263.0px;width:7.6px;height:7.6px;background:#03a9c6;border-radius:50%;"></div>
<div style="left:794.3px;top:263.0px;width:7.6px;height:7.6px;background:#2b3a48;border-radius:50%;"></div>
<div style="left:856.7px;top:263.0px;width:7.6px;height:7.6px;background:#b68cf0;border-radius:50%;"></div>
<div style="left:951.6px;top:249.0px;width:130.0px;height:1.0px;background:#e7ecf1;"></div>
<div style="left:48.0px;top:363.0px;width:1061.0px;height:340.0px;border:1px solid #dae1e6;box-shadow:0 0 0 .5px rgba(218,225,230,.7);border-radius:8px;background:#fff;"></div>
<svg style="left:73.6px;top:387.4px;" width="17.5" height="16.8" viewBox="0 0 17.4 16.8" fill="none"><rect x=".9" y=".9" width="15.600" height="15" rx="2.600" stroke="#4b5860" stroke-width="1.500"/><path d="M5 1v5.200a.800.800 0 0 0 .800.800h5.800a.800.800 0 0 0 .800-.800V1" stroke="#4b5860" stroke-width="1.500"/></svg>
<svg style="left:130.5px;top:393.2px;" width="8" height="5.5" viewBox="0 0 8 5.5" fill="none"><path d="M1 1l3 3 3-3" stroke="#4b5860" stroke-width="1.500" stroke-linecap="round" stroke-linejoin="round"/></svg>
<svg style="left:156.0px;top:387.0px;" width="20" height="19.6" viewBox="0 0 20 19.6" fill="none"><path d="M8.600 3.200H3.800A2.300 2.300 0 0 0 1.500 5.500v10.400a2.300 2.300 0 0 0 2.300 2.300h10.800a2.300 2.300 0 0 0 2.300-2.300V14.600M7.400 12.200L18 1.700M11.600 1.500h6.600v6.600" stroke="#4b5860" stroke-width="1.500" stroke-linecap="round" stroke-linejoin="round"/></svg>
<svg style="left:239.8px;top:384.6px;" width="19.5" height="21" viewBox="0 0 19.5 21" fill="none"><rect x="2.500" y="6.400" width="5.300" height="12.600" rx="1.600" stroke="#4b5860" stroke-width="1.500"/><rect x="12.400" y="12.600" width="5" height="6.400" rx="1.500" stroke="#4b5860" stroke-width="1.500"/><path d="M7.200 .800l8.600 7.600M11.400 8.800h4.800V4.100" stroke="#4b5860" stroke-width="1.400" stroke-linecap="round" stroke-linejoin="round"/></svg>
<svg style="left:325.0px;top:384.8px;" width="19.5" height="19.5" viewBox="0 0 19.5 19.5" fill="none"><path d="M6 18.200H3.500a2.200 2.200 0 0 1-2.200-2.200V3.400a2.200 2.200 0 0 1 2.200-2.200h12.500a2.200 2.200 0 0 1 2.200 2.200V16a2.200 2.200 0 0 1-2.200 2.200H13.600M9.800 18.600V8.600M6.200 12.200l3.600-3.700 3.600 3.700" stroke="#4b5860" stroke-width="1.500" stroke-linecap="round" stroke-linejoin="round"/></svg>
<svg style="left:408.2px;top:384.2px;overflow:visible;" width="18.6" height="20.4" viewBox="0 0 18.2 19.6" fill="none"><path d="M10.3 1.6a1 1 0 0 0-2.6 0l-.3 1.3a1.2 1.2 0 0 1-1.7.8l-1.2-.6a1.3 1.3 0 0 0-1.9 1.8l.7 1.1a1.2 1.2 0 0 1-.7 1.8l-1.2.3a1.3 1.3 0 0 0 0 2.6l1.2.3a1.2 1.2 0 0 1 .7 1.8l-.7 1.1a1.3 1.3 0 0 0 1.9 1.8l1.2-.6a1.2 1.2 0 0 1 1.7.8l.3 1.3a1.3 1.3 0 0 0 2.6 0l.3-1.3a1.2 1.2 0 0 1 1.7-.8l1.2.6a1.3 1.3 0 0 0 1.9-1.8l-.7-1.1a1.2 1.2 0 0 1 .7-1.8l1.2-.3a1.3 1.3 0 0 0 0-2.6l-1.2-.3a1.2 1.2 0 0 1-.7-1.8l.7-1.1a1.3 1.3 0 0 0-1.9-1.8l-1.2.6a1.2 1.2 0 0 1-1.7-.8z" stroke="#4b5860" stroke-width="1.350" stroke-linejoin="round" transform="translate(.1 .1)"/><circle cx="9.100" cy="9.800" r="3" stroke="#4b5860" stroke-width="1.350"/></svg>
<svg style="left:939.8px;top:383.7px;" width="18" height="18" viewBox="0 0 18 18" fill="none"><circle cx="9" cy="9" r="7.9" stroke="#0f7896" stroke-width="1.8"/><path d="M5.2 9h7.6M9 5.2v7.6" stroke="#0f7896" stroke-width="1.8" stroke-linecap="round"/></svg>
<div style="left:1027.2px;top:381.3px;width:24.5px;height:24.5px;border:1px solid #e1e7ed;border-radius:4px;background:#fff;"></div>
<div style="left:1062.3px;top:381.3px;width:24.5px;height:24.5px;border:1px solid #e1e7ed;border-radius:4px;background:#fff;"></div>
<svg style="left:1032.5px;top:387.9px;" width="14.4" height="12.2" viewBox="0 0 14.4 12.2" fill="none"><path d="M0 1h6.2M8.2 1h6.2" stroke="#3a464d" stroke-width="1.6"/><path d="M0 6.1h6.2M8.2 6.1h6.2" stroke="#3a464d" stroke-width="1.6"/><path d="M0 11.2h6.2M8.2 11.2h6.2" stroke="#3a464d" stroke-width="1.6"/></svg>
<svg style="left:1067.3px;top:387.9px;" width="15.2" height="12.2" viewBox="0 0 15.2 12.2" fill="none"><path d="M0 1h4.500M5.350 1h4.500M10.700 1h4.500" stroke="#3a464d" stroke-width="1.6"/><path d="M0 6.1h4.500M5.350 6.1h4.500M10.700 6.1h4.500" stroke="#3a464d" stroke-width="1.6"/><path d="M0 11.2h4.500M5.350 11.2h4.500M10.700 11.2h4.500" stroke="#3a464d" stroke-width="1.6"/></svg>
<div style="left:62.0px;top:419.6px;width:1029.6px;height:45.0px;background:#f6f9fc;border:1px solid #e4eaf1;box-shadow:0 0 0 .5px rgba(228,234,241,.7);border-radius:3.5px;"></div>
<div style="left:62.4px;top:566.0px;width:1016.5px;height:1.0px;background:#e6edf3;"></div>
<div style="left:420.5px;top:673.6px;width:658.4px;height:1.0px;background:#e6edf3;"></div>
<div style="left:75.5px;top:484.9px;width:11.3px;height:11.3px;border:1px solid #b4bec5;border-radius:2px;background:#fff;"></div>
<div style="left:114.0px;top:474.2px;width:30.8px;height:31.6px;border:1px solid #d6dde3;box-shadow:0 0 0 .6px rgba(214,221,227,.8);border-radius:2px;background:#fff;"></div>
<svg style="left:114.1px;top:474.2px;" width="31" height="32" viewBox="0 0 31 32" fill="none"><g style="filter:blur(.3px)"><path d="M3.700 12.400L9.200 9.800l2.400.600 1.300 4.100-1.300 3.100-4.100 2.500-3.100-1.800-1.100-3.800z" fill="#1d1a21"/><path d="M4.200 12.900l2.700-1.200.800 7-2.800-1.400z" fill="#34303a"/><path d="M21.300 12.400l4.100 1.400 1.400 1.400-.300 4.500-3.100.700-4.200 2.400-2-1.700-.600-3.800 1.900-2.800z" fill="#2a262c"/><path d="M17.500 16.900l2.800-1 .700 4.800-2.100 1.600-1.400-1.600z" fill="#777078"/><path d="M21.800 14.200l1.200.300.300 5.200-1.200.500z" fill="#4d4850"/></g></svg>
<svg style="left:154.8px;top:482.2px;" width="16" height="16" viewBox="0 0 16 16" fill="none"><circle cx="8" cy="8" r="7.200" stroke="#58bb5e" stroke-width="1.400" fill="#edfaee"/><path d="M4.800 8.300l2.200 2.200 4.300-4.500" stroke="#45ad4c" stroke-width="1.500" stroke-linecap="round" stroke-linejoin="round"/></svg>
<svg style="left:311.8px;top:484.6px;overflow:visible;" width="13" height="10.6" viewBox="0 0 13 10.6" fill="none"><path d="M1 3h10.200M8.600 .800l2.600 2.200-2.600 2.200M12 7.600H1.800M4.400 5.400L1.800 7.600l2.600 2.200" stroke="#78848b" stroke-width="1.250" stroke-linecap="round" stroke-linejoin="round"/></svg>
<div style="left:333.3px;top:482.5px;width:32.6px;height:15.7px;border:1px solid #7d8a92;border-radius:8px;"></div>
<div style="left:421.2px;top:496.6px;width:105.8px;height:1.0px;background:#1e272c;"></div>
<svg style="left:553.3px;top:480.9px;" width="15.4" height="18.4" viewBox="0 0 14.8 18" fill="none"><path d="M2.700 .900h6.600l4.600 4.600v9.700a1.900 1.900 0 0 1-1.900 1.900H2.700A1.900 1.900 0 0 1 .900 15.200V2.700A1.900 1.900 0 0 1 2.700 .900z" stroke="#7a858d" stroke-width="1.350" stroke-linejoin="round"/><path d="M9.300 .900v2.900a1.700 1.700 0 0 0 1.700 1.700h2.900M4 6.800h2.200M4 10.100h7M4 13.300h7" stroke="#7a858d" stroke-width="1.250" stroke-linecap="round" stroke-linejoin="round"/></svg>
<div style="left:578.0px;top:481.1px;width:18.6px;height:18.6px;border:1px solid #bcc5cb;box-shadow:0 0 0 .4px rgba(188,197,203,.7);border-radius:4.500px;background:#fff;"></div>
<svg style="left:582.7px;top:488.6px;" width="9.2" height="6.2" viewBox="0 0 9.2 6.2" fill="none"><path d="M1 1l3.600 3.700L8.200 1" stroke="#434f57" stroke-width="1.550" stroke-linecap="round" stroke-linejoin="round"/></svg>
<div style="left:804.4px;top:480.0px;width:34.6px;height:19.2px;border:1px solid #9ea9b0;border-radius:2px;background:#fff;"></div>
<svg style="left:947.3px;top:486.6px;" width="9" height="4.6" viewBox="0 0 9 4.6" fill="none"><path d="M.2.2h8.6L4.500 4.400z" fill="#3a464d"/></svg>
<svg style="left:1025.2px;top:485.0px;" width="14.4" height="7" viewBox="0 0 14.4 7" fill="none"><path d="M.6 1h13.200M.6 5.800h13.200" stroke="#c8cfd5" stroke-width="1.650" stroke-linecap="round"/></svg>
<div style="left:1051.8px;top:479.2px;width:27.6px;height:17.0px;border:1px solid #b2bbc2;border-radius:9px;background:#fff;"></div>
<svg style="left:1057.6px;top:485.9px;" width="16" height="4" viewBox="0 0 16 4" fill="none"><circle cx="1.900" cy="2" r="1.600" fill="#98a3aa"/><circle cx="8" cy="2" r="1.600" fill="#98a3aa"/><circle cx="14.100" cy="2" r="1.600" fill="#98a3aa"/></svg>
<div style="left:75.5px;top:593.9px;width:11.3px;height:11.3px;border:1px solid #b4bec5;border-radius:2px;background:#fff;"></div>
<div style="left:114.0px;top:583.2px;width:30.8px;height:31.6px;border:1px solid #d6dde3;box-shadow:0 0 0 .6px rgba(214,221,227,.8);border-radius:2px;background:#fff;"></div>
<svg style="left:114.1px;top:583.2px;" width="31" height="32" viewBox="0 0 31 32" fill="none"><g style="filter:blur(.3px)"><path d="M3.700 12.400L9.200 9.800l2.400.600 1.300 4.100-1.300 3.100-4.100 2.500-3.100-1.800-1.100-3.800z" fill="#1d1a21"/><path d="M4.200 12.900l2.700-1.200.800 7-2.800-1.400z" fill="#34303a"/><path d="M21.300 12.400l4.100 1.400 1.400 1.400-.300 4.500-3.100.700-4.200 2.400-2-1.700-.600-3.800 1.900-2.800z" fill="#2a262c"/><path d="M17.500 16.900l2.800-1 .700 4.800-2.100 1.600-1.400-1.600z" fill="#777078"/><path d="M21.800 14.200l1.200.300.300 5.200-1.200.500z" fill="#4d4850"/></g></svg>
<svg style="left:154.9px;top:591.1px;" width="16" height="16" viewBox="0 0 16 16" fill="none"><circle cx="8" cy="8" r="7.100" stroke="#f2bf2b" stroke-width="1.600" fill="#fffae8"/><path d="M8 4.200v4.600" stroke="#f2bf2b" stroke-width="1.700" stroke-linecap="round"/><circle cx="8" cy="11.400" r="1" fill="#f2bf2b"/></svg>
<svg style="left:311.8px;top:593.6px;overflow:visible;" width="13" height="10.6" viewBox="0 0 13 10.6" fill="none"><path d="M1 3h10.200M8.600 .800l2.600 2.200-2.600 2.200M12 7.600H1.800M4.400 5.400L1.800 7.600l2.600 2.200" stroke="#78848b" stroke-width="1.250" stroke-linecap="round" stroke-linejoin="round"/></svg>
<div style="left:333.3px;top:591.5px;width:32.6px;height:15.7px;border:1.400px solid #323d44;border-radius:8px;"></div>
<div style="left:426.4px;top:605.6px;width:105.8px;height:1.0px;background:#1e272c;"></div>
<svg style="left:558.5px;top:589.9px;" width="15.4" height="18.4" viewBox="0 0 14.8 18" fill="none"><path d="M2.700 .900h6.600l4.600 4.600v9.700a1.900 1.900 0 0 1-1.900 1.900H2.700A1.900 1.900 0 0 1 .900 15.200V2.700A1.900 1.900 0 0 1 2.700 .900z" stroke="#7a858d" stroke-width="1.350" stroke-linejoin="round"/><path d="M9.300 .900v2.900a1.700 1.700 0 0 0 1.700 1.700h2.900M4 6.800h2.200M4 10.100h7M4 13.300h7" stroke="#7a858d" stroke-width="1.250" stroke-linecap="round" stroke-linejoin="round"/></svg>
<div style="left:583.2px;top:590.1px;width:18.6px;height:18.6px;border:1px solid #bcc5cb;box-shadow:0 0 0 .4px rgba(188,197,203,.7);border-radius:4.500px;background:#fff;"></div>
<svg style="left:587.9px;top:597.6px;" width="9.2" height="6.2" viewBox="0 0 9.2 6.2" fill="none"><path d="M1 1l3.600 3.700L8.200 1" stroke="#434f57" stroke-width="1.550" stroke-linecap="round" stroke-linejoin="round"/></svg>
<svg style="left:947.3px;top:595.6px;" width="9" height="4.6" viewBox="0 0 9 4.6" fill="none"><path d="M.2.2h8.6L4.500 4.400z" fill="#3a464d"/></svg>
<svg style="left:1025.2px;top:594.0px;" width="14.4" height="7" viewBox="0 0 14.4 7" fill="none"><path d="M.6 1h13.200M.6 5.800h13.200" stroke="#c8cfd5" stroke-width="1.650" stroke-linecap="round"/></svg>
<div style="left:1051.8px;top:588.2px;width:27.6px;height:17.0px;border:1px solid #b2bbc2;border-radius:9px;background:#fff;"></div>
<svg style="left:1057.6px;top:594.9px;" width="16" height="4" viewBox="0 0 16 4" fill="none"><circle cx="1.900" cy="2" r="1.600" fill="#98a3aa"/><circle cx="8" cy="2" r="1.600" fill="#98a3aa"/><circle cx="14.100" cy="2" r="1.600" fill="#98a3aa"/></svg>
<div style="left:1009.2px;top:507.3px;width:69.8px;height:32.4px;border:1px solid #c3cbd1;border-radius:4px;background:#fff;"></div>
<div style="left:1016.0px;top:514.4px;width:32.2px;height:17.2px;border:1px solid #87939a;box-shadow:0 0 0 .3px #87939a;border-radius:9px;"></div>
<svg style="left:1055.6px;top:514.0px;" width="16" height="18.4" viewBox="0 0 16 18.4" fill="none"><path d="M1 4.400h14M5.400 4.200V2.400a1.400 1.400 0 0 1 1.400-1.400h2.400a1.400 1.400 0 0 1 1.400 1.400v1.800M2.500 4.600v11a1.800 1.800 0 0 0 1.800 1.800h7.400a1.800 1.800 0 0 0 1.800-1.800v-11M6.300 8.600v5M9.700 8.600v5" stroke="#66727a" stroke-width="1.300" stroke-linecap="round" stroke-linejoin="round"/></svg>
<svg style="left:558.5px;top:679.2px;" width="15.4" height="18.4" viewBox="0 0 14.8 18" fill="none"><path d="M2.700 .900h6.600l4.600 4.600v9.700a1.900 1.900 0 0 1-1.900 1.900H2.700A1.900 1.900 0 0 1 .900 15.200V2.700A1.900 1.900 0 0 1 2.700 .900z" stroke="#7a858d" stroke-width="1.350" stroke-linejoin="round"/><path d="M9.300 .900v2.900a1.700 1.700 0 0 0 1.700 1.700h2.900M4 6.800h2.200M4 10.100h7M4 13.300h7" stroke="#7a858d" stroke-width="1.250" stroke-linecap="round" stroke-linejoin="round"/></svg>
<div style="left:583.0px;top:679.6px;width:18.6px;height:18.6px;border:1px solid #bcc5cb;box-shadow:0 0 0 .4px rgba(188,197,203,.7);border-radius:4.500px;background:#fff;"></div>
<svg style="left:587.8px;top:686.6px;" width="9" height="6" viewBox="0 0 9 6" fill="none"><path d="M1 1l3.5 3.5L8 1" stroke="#3a464d" stroke-width="1.3" stroke-linecap="round" stroke-linejoin="round"/></svg>
<span class="t" style="left:46.8px;top:51px;font-size:22.5px;font-weight:700;color:#222e34;transform-origin:0 18px;transform:translateY(0.20px) scale(1.3167,0.9867);-webkit-text-stroke:1px #222e34;">EMS</span>
<span class="t" style="left:115.9px;top:51px;font-size:22.5px;font-weight:400;color:#222e34;transform-origin:0 18px;transform:translateY(0.20px) scale(1.2524,0.9867);-webkit-text-stroke:0.95px #222e34;">Admin</span>
<span class="t" style="left:562.8px;top:51px;font-size:15px;font-weight:400;color:#1f2a30;transform-origin:0 13px;transform:translateY(-0.40px) scale(0.9536,1.0000);">Services</span>
<span class="t" style="left:662.7px;top:51px;font-size:15px;font-weight:400;color:#1f2a30;transform-origin:0 13px;transform:translateY(-0.40px) scale(0.8276,1.0000);">ERP</span>
<span class="t" style="left:735.8px;top:51px;font-size:15px;font-weight:400;color:#1f2a30;transform-origin:0 13px;transform:translateY(-0.40px) scale(0.8944,1.0000);">BOM Tools</span>
<span class="t" style="left:843.8px;top:51px;font-size:15px;font-weight:400;color:#1f2a30;transform-origin:0 13px;transform:translateY(-0.40px) scale(0.9219,1.0000);">Eng Tools</span>
<span class="t" style="left:945.8px;top:51px;font-size:15px;font-weight:400;color:#1f2a30;transform-origin:0 13px;transform:translateY(-0.40px) scale(0.9180,1.0000);">About Us</span>
<span class="t" style="left:1055.8px;top:53px;font-size:13px;font-weight:700;color:#1f2a30;transform-origin:0 11px;transform:translateY(-0.40px) scale(0.9118,1.0000);">Login</span>
<span class="t" style="left:65.8px;top:124px;font-size:16px;font-weight:700;color:#1e272c;transform-origin:0 13px;transform:translateY(0.30px) scale(0.9540,0.9167);">BOM Quote</span>
<span class="t" style="left:1019.8px;top:126px;font-size:13px;font-weight:700;color:#fff;transform-origin:0 11px;transform:translateY(0.40px) scale(0.9507,1.0000);">Start Quote</span>
<span class="t" style="left:76.2px;top:206px;font-size:12px;font-weight:700;color:#414e57;transform-origin:0 10px;transform:scale(0.9427,0.9333);">Project Name</span>
<span class="t" style="left:76.6px;top:228px;font-size:11.5px;font-weight:400;color:#5f6b73;transform-origin:0 9px;transform:translateY(0.20px) scale(0.9952,1.0000);">Board Name</span>
<span class="t" style="left:266.6px;top:226px;font-size:11.5px;font-weight:400;color:#5f6b73;transform-origin:0 9px;transform:translateY(0.20px) scale(0.9860,1.0000);">Revision</span>
<span class="t" style="left:84.1px;top:252px;font-size:12.7px;font-weight:400;color:#2b353b;transform-origin:0 10px;transform:translateY(-0.30px) scale(0.9391,1.0000);">Test-BomAdmin.xlsx</span>
<span class="t" style="left:273.0px;top:252px;font-size:12.7px;font-weight:400;color:#2b353b;transform-origin:0 10px;transform:translateY(-0.30px) scale(0.7886,1.0000);">Rev_1</span>
<span class="t" style="left:75.6px;top:288px;font-size:11.5px;font-weight:400;color:#5f6b73;transform-origin:0 9px;transform:translateY(0.30px) scale(0.9922,1.0000);">Board Qty</span>
<span class="t" style="left:152.4px;top:288px;font-size:13px;font-weight:400;color:#2b353b;transform-origin:0 11px;transform:translateY(-0.20px) scale(1.0500,1.0000);">5</span>
<span class="t" style="left:200.3px;top:288px;font-size:13px;font-weight:400;color:#2b353b;transform-origin:0 11px;transform:translateY(-0.20px) scale(0.9000,1.0000);">10</span>
<span class="t" style="left:251.1px;top:287px;font-size:13px;font-weight:400;color:#2b353b;transform-origin:0 11px;transform:translateY(-0.20px) scale(0.9000,1.0000);">10</span>
<span class="t" style="left:301.5px;top:288px;font-size:13px;font-weight:400;color:#2b353b;transform-origin:0 11px;transform:translateY(-0.20px) scale(0.9000,1.0000);">10</span>
<span class="t" style="left:381.8px;top:207px;font-size:12px;font-weight:700;color:#414e57;transform-origin:0 10px;transform:translateY(0.30px) scale(0.9278,0.9333);">Search Summary</span>
<span class="t" style="left:412.3px;top:232px;font-size:14.5px;font-weight:700;color:#1e272c;transform-origin:0 12px;transform:scale(1.0500,1.0000);">6</span>
<span class="t" style="left:412.3px;top:254px;font-size:14.5px;font-weight:700;color:#1e272c;transform-origin:0 12px;transform:translateY(-0.50px) scale(1.0250,1.0000);">2</span>
<span class="t" style="left:412.1px;top:278px;font-size:14.5px;font-weight:700;color:#1e272c;transform-origin:0 12px;transform:scale(0.7857,1.0000);">1</span>
<span class="t" style="left:426.2px;top:235px;font-size:10.5px;font-weight:400;color:#5f6b73;transform-origin:0 9px;transform:translateY(-0.30px) scale(1.0000,1.0000);">Parts Founded</span>
<span class="t" style="left:426.2px;top:257px;font-size:10.5px;font-weight:400;color:#5f6b73;transform-origin:0 9px;transform:translateY(-0.50px) scale(0.9929,1.0000);">Not Enough Stock</span>
<span class="t" style="left:428.7px;top:280px;font-size:10.5px;font-weight:400;color:#5f6b73;transform-origin:0 9px;transform:translateY(0.20px) scale(1.0000,1.0000);">No Pricing</span>
<span class="t" style="left:559.1px;top:229px;font-size:11.5px;font-weight:400;color:#5f6b73;transform-origin:0 9px;transform:scale(0.9600,1.0000);"># of Line Items</span>
<span class="t" style="left:558.1px;top:245px;font-size:11.5px;font-weight:400;color:#5f6b73;transform-origin:0 9px;transform:translateY(0.30px) scale(0.9593,1.0000);">SMT Placements</span>
<span class="t" style="left:559.1px;top:264px;font-size:11.5px;font-weight:400;color:#5f6b73;transform-origin:0 9px;transform:translateY(-0.30px) scale(0.9529,1.0000);">THT Placements</span>
<span class="t" style="left:559.1px;top:279px;font-size:11.5px;font-weight:400;color:#5f6b73;transform-origin:0 9px;transform:translateY(0.50px) scale(0.9379,1.0000);">QFN Placements</span>
<span class="t" style="left:660.9px;top:229px;font-size:11.5px;font-weight:700;color:#1e272c;transform-origin:0 9px;transform:scale(1.1333,1.0000);">6</span>
<span class="t" style="left:659.9px;top:245px;font-size:11.5px;font-weight:700;color:#1e272c;transform-origin:0 9px;transform:translateY(0.30px) scale(1.0000,1.0000);">19</span>
<span class="t" style="left:660.9px;top:262px;font-size:11.5px;font-weight:700;color:#1e272c;transform-origin:0 9px;transform:scale(1.1667,1.0000);">0</span>
<span class="t" style="left:660.9px;top:281px;font-size:11.5px;font-weight:700;color:#1e272c;transform-origin:0 9px;transform:scale(1.1667,1.0000);">0</span>
<span class="t" style="left:728.6px;top:206px;font-size:12px;font-weight:700;color:#414e57;transform-origin:0 10px;transform:translateY(0.50px) scale(0.9381,0.9333);">Vendor Statistics</span>
<span class="t" style="left:843.8px;top:222px;font-size:11px;font-weight:400;color:#6f7b83;transform-origin:0 9px;transform:translateY(0.30px) scale(0.9231,1.0000);">37% of 100%</span>
<span class="t" style="left:739.9px;top:261px;font-size:11.5px;font-weight:400;color:#3a464d;transform-origin:0 9px;transform:scale(1.0270,1.0000);">Mouser</span>
<span class="t" style="left:806.0px;top:261px;font-size:11.5px;font-weight:400;color:#3a464d;transform-origin:0 9px;transform:scale(0.9838,1.0000);">Digikey</span>
<span class="t" style="left:869.1px;top:261px;font-size:11.5px;font-weight:400;color:#3a464d;">Arrow</span>
<span class="t" style="left:991.0px;top:206px;font-size:11.5px;font-weight:700;color:#414e57;transform-origin:0 9px;transform:translateY(0.30px) scale(0.9563,1.0000);">Total Parts Cost</span>
<span class="t" style="left:1022.6px;top:224px;font-size:17px;font-weight:700;color:#1e272c;transform-origin:0 14px;transform:translateY(-0.40px) scale(0.9923,0.9750);">$52.35</span>
<span class="t" style="left:962.8px;top:264px;font-size:11.5px;font-weight:700;color:#414e57;transform-origin:0 9px;transform:translateY(0.30px) scale(0.9518,1.0000);">Parts Cost Per Board</span>
<span class="t" style="left:1039.6px;top:281px;font-size:12.5px;font-weight:700;color:#1e272c;transform-origin:0 10px;transform:translateY(-0.20px) scale(1.0548,1.0000);">$5.24</span>
<span class="t" style="left:97.9px;top:391px;font-size:11.5px;font-weight:400;color:#4b5860;transform-origin:0 9px;transform:translateY(-0.40px) scale(1.0680,1.0000);">Save</span>
<span class="t" style="left:182.2px;top:390px;font-size:11.5px;font-weight:400;color:#4b5860;transform-origin:0 9px;transform:translateY(0.30px) scale(1.0875,1.0000);">Export</span>
<span class="t" style="left:266.0px;top:391px;font-size:11.5px;font-weight:400;color:#4b5860;transform-origin:0 9px;transform:translateY(-0.40px) scale(1.1105,1.0000);">Attrition</span>
<span class="t" style="left:348.7px;top:389px;font-size:11.5px;font-weight:400;color:#4b5860;transform-origin:0 9px;transform:translateY(0.50px) scale(1.0514,1.0000);">Upload</span>
<span class="t" style="left:431.0px;top:390px;font-size:11.5px;font-weight:400;color:#4b5860;transform-origin:0 9px;transform:translateY(-0.40px) scale(1.0541,1.0000);">Preferences</span>
<span class="t" style="left:962.0px;top:389px;font-size:11.5px;font-weight:700;color:#0f7896;transform-origin:0 9px;transform:translateY(-0.40px) scale(0.8750,1.0000);">Add Part</span>
<span class="t" style="left:151.8px;top:439px;font-size:11px;font-weight:400;color:#3a464d;transform-origin:0 9px;transform:scale(1.0202,1.0000);-webkit-text-stroke:.25px #3a464d;">Manufacturer Part Number</span>
<span class="t" style="left:374.0px;top:431px;font-size:11px;font-weight:400;color:#3a464d;transform-origin:0 9px;transform:translateY(0.40px) scale(0.9811,1.0000);-webkit-text-stroke:.25px #3a464d;">Qty Per</span>
<span class="t" style="left:373.0px;top:444px;font-size:11px;font-weight:400;color:#3a464d;transform-origin:0 9px;transform:translateY(-0.20px) scale(1.0357,1.0000);-webkit-text-stroke:.25px #3a464d;">Board</span>
<span class="t" style="left:418.9px;top:439px;font-size:11px;font-weight:400;color:#3a464d;transform-origin:0 9px;transform:scale(1.0571,1.0000);-webkit-text-stroke:.25px #3a464d;">Distributor</span>
<span class="t" style="left:620.2px;top:439px;font-size:11px;font-weight:400;color:#3a464d;-webkit-text-stroke:.25px #3a464d;">Stock</span>
<span class="t" style="left:769.7px;top:433px;font-size:11px;font-weight:400;color:#3a464d;transform-origin:0 9px;transform:scale(1.0222,1.0000);-webkit-text-stroke:.25px #3a464d;">Exact</span>
<span class="t" style="left:770.7px;top:445px;font-size:11px;font-weight:400;color:#3a464d;transform-origin:0 9px;transform:translateY(0.40px) scale(1.0235,1.0000);-webkit-text-stroke:.25px #3a464d;">Qty</span>
<span class="t" style="left:803.6px;top:433px;font-size:11px;font-weight:400;color:#3a464d;transform-origin:0 9px;transform:scale(1.0440,1.0000);-webkit-text-stroke:.25px #3a464d;">Extra</span>
<span class="t" style="left:803.6px;top:445px;font-size:11px;font-weight:400;color:#3a464d;transform-origin:0 9px;transform:translateY(0.40px) scale(1.0440,1.0000);-webkit-text-stroke:.25px #3a464d;">Parts</span>
<span class="t" style="left:855.9px;top:433px;font-size:11px;font-weight:400;color:#3a464d;transform-origin:0 9px;transform:scale(0.9857,1.0000);-webkit-text-stroke:.25px #3a464d;">Order</span>
<span class="t" style="left:855.9px;top:445px;font-size:11px;font-weight:400;color:#3a464d;transform-origin:0 9px;transform:translateY(0.40px) scale(1.0235,1.0000);-webkit-text-stroke:.25px #3a464d;">Qty</span>
<span class="t" style="left:967.7px;top:433px;font-size:11px;font-weight:400;color:#3a464d;transform-origin:0 9px;transform:scale(0.9941,1.0000);-webkit-text-stroke:.25px #3a464d;">Ext.</span>
<span class="t" style="left:967.7px;top:445px;font-size:11px;font-weight:400;color:#3a464d;transform-origin:0 9px;transform:translateY(0.40px) scale(1.0292,1.0000);-webkit-text-stroke:.25px #3a464d;">Price</span>
<span class="t" style="left:894.1px;top:433px;font-size:11px;font-weight:400;color:#3a464d;-webkit-text-stroke:.25px #3a464d;">Unit Price</span>
<span class="t" style="left:1025.8px;top:433px;font-size:11px;font-weight:400;color:#3a464d;transform-origin:0 9px;transform:scale(1.0333,1.0000);-webkit-text-stroke:.25px #3a464d;">Actions</span>
<span class="t" style="left:95.3px;top:485px;font-size:12px;font-weight:400;color:#2b353b;transform-origin:0 10px;transform:translateY(0.20px) scale(0.7200,1.0000);">1</span>
<span class="t" style="left:180.0px;top:484px;font-size:13px;font-weight:700;color:#1e272c;transform-origin:0 11px;transform:translateY(-0.40px) scale(0.9008,1.0000);">C1210C105K1RACTU</span>
<span class="t" style="left:339.7px;top:487px;font-size:9px;font-weight:700;color:#7d8a92;transform-origin:0 7px;transform:translateY(-0.30px) scale(1.0316,1.0000);">DNP</span>
<span class="t" style="left:385.4px;top:484px;font-size:13px;font-weight:400;color:#2b353b;transform-origin:0 11px;transform:translateY(-0.40px) scale(0.9714,1.0000);">8</span>
<span class="t" style="left:179.1px;top:502px;font-size:12.5px;font-weight:700;color:#1e272c;transform-origin:0 10px;transform:translateY(-0.30px) scale(0.9189,1.0000);">Kemet</span>
<span class="t" style="left:180.0px;top:518px;font-size:10.5px;font-weight:400;color:#6f7b83;transform-origin:0 9px;transform:translateY(-0.40px) scale(0.8738,1.0000);">C1, C3, C6, C7, C11, C12, C14</span>
<span class="t" style="left:421.2px;top:484px;font-size:13px;font-weight:400;color:#1e272c;transform-origin:0 11px;transform:translateY(-0.40px) scale(0.9363,1.0000);-webkit-text-stroke:.4px #1e272c;">80-C1210C105K1R</span>
<span class="t" style="left:420.2px;top:502px;font-size:12.5px;font-weight:700;color:#1e272c;transform-origin:0 10px;transform:translateY(-0.30px) scale(0.9907,1.0000);">Mouser</span>
<span class="t" style="left:420.2px;top:523px;font-size:10.5px;font-weight:400;color:#6f7b83;transform-origin:0 9px;transform:scale(0.9532,1.0000);">Multilayer Ceramic Capacitors</span>
<span class="t" style="left:420.2px;top:535px;font-size:10.5px;font-weight:400;color:#6f7b83;transform-origin:0 9px;transform:translateY(-0.50px) scale(0.9551,1.0000);">Mlcc-Smf/Smt 100v 1uf X7r</span>
<span class="t" style="left:420.3px;top:546px;font-size:10.5px;font-weight:400;color:#6f7b83;transform-origin:0 9px;transform:scale(0.8913,1.0000);">1210 10%</span>
<span class="t" style="left:620.0px;top:480px;font-size:13px;font-weight:700;color:#1e272c;transform-origin:0 11px;transform:translateY(0.20px) scale(1.0194,1.0000);">24849</span>
<span class="t" style="left:619.0px;top:501px;font-size:12.5px;font-weight:400;color:#3a464d;transform-origin:0 10px;transform:translateY(0.20px) scale(0.9500,1.0000);">Pkg</span>
<span class="t" style="left:643.4px;top:501px;font-size:12.5px;font-weight:400;color:#3a464d;transform-origin:0 10px;transform:translateY(0.20px) scale(0.8750,1.0000);">CT</span>
<span class="t" style="left:676.1px;top:501px;font-size:12.5px;font-weight:400;color:#3a464d;transform-origin:0 10px;transform:translateY(0.20px) scale(0.9333,1.0000);">MOQ 1</span>
<span class="t" style="left:619.0px;top:523px;font-size:10.5px;font-weight:400;color:#6f7b83;transform-origin:0 9px;transform:scale(0.9523,1.0000);">Surface Mount - 1210 (3225</span>
<span class="t" style="left:619.0px;top:534px;font-size:10.5px;font-weight:400;color:#6f7b83;transform-origin:0 9px;transform:translateY(0.40px) scale(0.9545,1.0000);">metric) 2.5 mm (0.098 in) x...</span>
<span class="t" style="left:771.2px;top:484px;font-size:13px;font-weight:400;color:#2b353b;transform-origin:0 11px;transform:translateY(-0.40px) scale(0.9714,1.0000);">40</span>
<span class="t" style="left:810.1px;top:484px;font-size:13px;font-weight:400;color:#2b353b;transform-origin:0 11px;transform:translateY(-0.40px) scale(0.8846,1.0000);">10</span>
<span class="t" style="left:855.4px;top:484px;font-size:13px;font-weight:400;color:#2b353b;transform-origin:0 11px;transform:translateY(-0.40px) scale(1.0231,1.0000);">50</span>
<span class="t" style="left:891.9px;top:484px;font-size:13px;font-weight:400;color:#2b353b;transform-origin:0 11px;transform:translateY(-0.40px) scale(0.9444,1.0000);">$0.38900</span>
<span class="t" style="left:969.4px;top:484px;font-size:13px;font-weight:400;color:#2b353b;transform-origin:0 11px;transform:translateY(-0.40px) scale(0.9154,1.0000);">$19.45</span>
<span class="t" style="left:96.0px;top:594px;font-size:12px;font-weight:400;color:#2b353b;transform-origin:0 10px;transform:translateY(0.20px) scale(1.0500,1.0000);">2</span>
<span class="t" style="left:180.0px;top:593px;font-size:13px;font-weight:700;color:#1e272c;transform-origin:0 11px;transform:translateY(-0.40px) scale(0.9008,1.0000);">C1210C105K1RACTU</span>
<span class="t" style="left:339.7px;top:596px;font-size:9px;font-weight:700;color:#323d44;transform-origin:0 7px;transform:translateY(-0.30px) scale(1.0316,1.0000);">DNP</span>
<span class="t" style="left:385.2px;top:593px;font-size:13px;font-weight:400;color:#2b353b;transform-origin:0 11px;transform:translateY(-0.40px) scale(0.8154,1.0000);">10</span>
<span class="t" style="left:179.1px;top:611px;font-size:12.5px;font-weight:700;color:#1e272c;transform-origin:0 10px;transform:translateY(-0.30px) scale(0.9189,1.0000);">Kemet</span>
<span class="t" style="left:180.0px;top:627px;font-size:10.5px;font-weight:400;color:#6f7b83;transform-origin:0 9px;transform:translateY(-0.40px) scale(0.8738,1.0000);">C1, C3, C6, C7, C11, C12, C14</span>
<span class="t" style="left:426.4px;top:593px;font-size:13px;font-weight:400;color:#1e272c;transform-origin:0 11px;transform:translateY(-0.40px) scale(0.9363,1.0000);-webkit-text-stroke:.4px #1e272c;">80-C1210C105K1R</span>
<span class="t" style="left:425.4px;top:613px;font-size:12.5px;font-weight:700;color:#1e272c;transform-origin:0 10px;transform:scale(0.9907,1.0000);">Mouser</span>
<span class="t" style="left:425.4px;top:633px;font-size:10.5px;font-weight:400;color:#6f7b83;transform-origin:0 9px;transform:translateY(-0.44px) scale(0.9532,1.0000);">Multilayer Ceramic Capacitors</span>
<span class="t" style="left:425.4px;top:644px;font-size:10.5px;font-weight:400;color:#6f7b83;transform-origin:0 9px;transform:translateY(0.16px) scale(0.9551,1.0000);">Mlcc-Smf/Smt 100v 1uf X7r</span>
<span class="t" style="left:425.5px;top:656px;font-size:10.5px;font-weight:400;color:#6f7b83;transform-origin:0 9px;transform:translateY(-0.24px) scale(0.8913,1.0000);">1210 10%</span>
<span class="t" style="left:620.0px;top:593px;font-size:13px;font-weight:700;color:#1e272c;transform-origin:0 11px;transform:scale(1.0194,1.0000);">24849</span>
<span class="t" style="left:619.0px;top:613px;font-size:12.5px;font-weight:400;color:#3a464d;transform-origin:0 10px;transform:translateY(0.43px) scale(0.9500,1.0000);">Pkg</span>
<span class="t" style="left:643.4px;top:613px;font-size:12.5px;font-weight:400;color:#3a464d;transform-origin:0 10px;transform:translateY(0.43px) scale(0.8750,1.0000);">CT</span>
<span class="t" style="left:676.1px;top:613px;font-size:12.5px;font-weight:400;color:#3a464d;transform-origin:0 10px;transform:translateY(0.43px) scale(0.9333,1.0000);">MOQ 1</span>
<span class="t" style="left:619.0px;top:633px;font-size:10.5px;font-weight:400;color:#6f7b83;transform-origin:0 9px;transform:scale(0.9523,1.0000);">Surface Mount - 1210 (3225</span>
<span class="t" style="left:619.0px;top:645px;font-size:10.5px;font-weight:400;color:#6f7b83;transform-origin:0 9px;transform:scale(0.9545,1.0000);">metric) 2.5 mm (0.098 in) x...</span>
<span class="t" style="left:771.2px;top:593px;font-size:13px;font-weight:400;color:#2b353b;transform-origin:0 11px;transform:translateY(-0.40px) scale(0.9286,1.0000);">0</span>
<span class="t" style="left:809.8px;top:593px;font-size:13px;font-weight:400;color:#2b353b;transform-origin:0 11px;transform:translateY(-0.40px) scale(0.9286,1.0000);">0</span>
<span class="t" style="left:856.4px;top:593px;font-size:13px;font-weight:400;color:#2b353b;transform-origin:0 11px;transform:translateY(-0.40px) scale(0.9286,1.0000);">0</span>
<span class="t" style="left:891.9px;top:593px;font-size:13px;font-weight:400;color:#2b353b;transform-origin:0 11px;transform:translateY(-0.40px) scale(0.9444,1.0000);">$0.38900</span>
<span class="t" style="left:969.4px;top:593px;font-size:13px;font-weight:400;color:#2b353b;transform-origin:0 11px;transform:translateY(-0.40px) scale(0.9154,1.0000);">$19.45</span>
<span class="t" style="left:1022.5px;top:520px;font-size:9px;font-weight:700;color:#7d8a92;transform-origin:0 7px;transform:translateY(-0.30px) scale(1.0105,1.0500);">DNB</span>
<span class="t" style="left:426.4px;top:685px;font-size:12.5px;font-weight:700;color:#1e272c;transform-origin:0 10px;transform:translateY(-0.40px) scale(0.9250,1.0000);">Arrow</span>
<span class="t" style="left:620.0px;top:684px;font-size:13px;font-weight:700;color:#1e272c;transform-origin:0 11px;transform:translateY(-0.40px) scale(1.0000,1.0000);">2286</span>
<span class="t" style="left:770.0px;top:687px;font-size:13px;font-weight:400;color:#2b353b;transform-origin:0 11px;transform:translateY(-0.40px) scale(0.9538,1.0000);">25</span>
<span class="t" style="left:898.8px;top:687px;font-size:13px;font-weight:400;color:#2b353b;transform-origin:0 11px;transform:translateY(-0.40px) scale(0.9259,1.0000);">$0.08700</span>
<span class="t" style="left:976.9px;top:687px;font-size:13px;font-weight:400;color:#2b353b;transform-origin:0 11px;transform:translateY(-0.40px) scale(0.8750,1.0000);">$2.00</span>
</div></div>
</body></html>
